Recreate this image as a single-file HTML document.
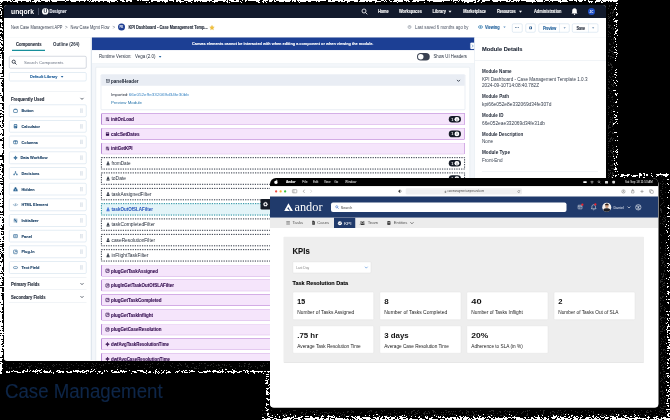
<!DOCTYPE html>
<html><head><meta charset="utf-8"><title>Case Management</title>
<style>
html,body{margin:0;padding:0;background:#000;}
body{width:670px;height:420px;position:relative;overflow:hidden;font-family:"Liberation Sans",sans-serif;}
.b{position:absolute;display:block;}
.t{position:absolute;white-space:nowrap;display:block;}
.w{position:absolute;overflow:hidden;transform-origin:0 0;transform:scale(0.25) translateZ(0);}
svg{overflow:visible}
</style></head><body>
<svg class="b" style="left:0;top:0" width="670" height="420" shape-rendering="crispEdges"><path d="M609 5h1v1h-1zM611 5h1v1h-1zM609 6h1v1h-1zM608 8h1v1h-1zM611 9h1v1h-1zM613 10h1v1h-1zM613 11h1v1h-1zM610 12h1v1h-1zM612 12h1v1h-1zM613 12h1v1h-1zM610 13h1v1h-1zM612 13h1v1h-1zM608 14h1v1h-1zM612 15h1v1h-1zM608 16h1v1h-1zM610 16h1v1h-1zM609 17h1v1h-1zM608 18h1v1h-1zM609 20h1v1h-1zM613 21h1v1h-1zM608 22h1v1h-1zM608 24h1v1h-1zM608 25h1v1h-1zM609 25h1v1h-1zM610 25h1v1h-1zM609 26h1v1h-1zM608 27h1v1h-1zM609 27h1v1h-1zM612 27h1v1h-1zM611 28h1v1h-1zM613 28h1v1h-1zM613 29h1v1h-1zM608 31h1v1h-1zM609 32h1v1h-1zM610 33h1v1h-1zM608 34h1v1h-1zM608 36h1v1h-1zM610 36h1v1h-1zM613 38h1v1h-1zM611 39h1v1h-1zM613 39h1v1h-1zM613 42h1v1h-1zM609 43h1v1h-1zM613 43h1v1h-1zM609 44h1v1h-1zM610 44h1v1h-1zM612 46h1v1h-1zM611 47h1v1h-1zM609 49h1v1h-1zM609 50h1v1h-1zM610 50h1v1h-1zM611 51h1v1h-1zM612 51h1v1h-1zM608 52h1v1h-1zM609 52h1v1h-1zM613 52h1v1h-1zM612 53h1v1h-1zM613 54h1v1h-1zM608 55h1v1h-1zM608 56h1v1h-1zM610 56h1v1h-1zM611 56h1v1h-1zM612 57h1v1h-1zM613 57h1v1h-1zM610 58h1v1h-1zM608 62h1v1h-1zM610 63h1v1h-1zM608 64h1v1h-1zM610 64h1v1h-1zM611 64h1v1h-1zM608 65h1v1h-1zM609 65h1v1h-1zM611 65h1v1h-1zM612 66h1v1h-1zM611 67h1v1h-1zM612 67h1v1h-1zM611 69h1v1h-1zM609 70h1v1h-1zM608 71h1v1h-1zM611 73h1v1h-1zM609 76h1v1h-1zM612 76h1v1h-1zM613 76h1v1h-1zM610 77h1v1h-1zM608 79h1v1h-1zM611 79h1v1h-1zM608 81h1v1h-1zM609 81h1v1h-1zM609 82h1v1h-1zM613 83h1v1h-1zM608 84h1v1h-1zM611 84h1v1h-1zM613 84h1v1h-1zM612 85h1v1h-1zM613 86h1v1h-1zM608 87h1v1h-1zM608 88h1v1h-1zM609 88h1v1h-1zM609 90h1v1h-1zM611 91h1v1h-1zM610 93h1v1h-1zM608 95h1v1h-1zM612 96h1v1h-1zM608 97h1v1h-1zM611 97h1v1h-1zM612 97h1v1h-1zM612 99h1v1h-1zM610 101h1v1h-1zM613 102h1v1h-1zM611 105h1v1h-1zM613 105h1v1h-1zM608 106h1v1h-1zM612 106h1v1h-1zM609 107h1v1h-1zM608 108h1v1h-1zM613 109h1v1h-1zM611 110h1v1h-1zM608 112h1v1h-1zM611 112h1v1h-1zM608 114h1v1h-1zM613 115h1v1h-1zM610 117h1v1h-1zM612 117h1v1h-1zM612 118h1v1h-1zM610 119h1v1h-1zM611 119h1v1h-1zM612 120h1v1h-1zM610 121h1v1h-1zM609 122h1v1h-1zM610 122h1v1h-1zM612 122h1v1h-1zM609 124h1v1h-1zM612 124h1v1h-1zM608 125h1v1h-1zM612 125h1v1h-1zM608 126h1v1h-1zM612 126h1v1h-1zM608 127h1v1h-1zM609 127h1v1h-1zM610 127h1v1h-1zM608 128h1v1h-1zM613 129h1v1h-1zM610 131h1v1h-1zM609 132h1v1h-1zM612 132h1v1h-1zM608 133h1v1h-1zM612 133h1v1h-1zM613 133h1v1h-1zM608 135h1v1h-1zM611 137h1v1h-1zM608 138h1v1h-1zM610 138h1v1h-1zM611 138h1v1h-1zM613 138h1v1h-1zM610 139h1v1h-1zM612 139h1v1h-1zM609 140h1v1h-1zM612 140h1v1h-1zM608 141h1v1h-1zM609 141h1v1h-1zM610 141h1v1h-1zM608 143h1v1h-1zM608 145h1v1h-1zM612 145h1v1h-1zM608 147h1v1h-1zM613 147h1v1h-1zM612 148h1v1h-1zM613 149h1v1h-1zM610 150h1v1h-1zM611 150h1v1h-1zM608 151h1v1h-1zM610 151h1v1h-1zM611 152h1v1h-1zM612 152h1v1h-1zM608 153h1v1h-1zM612 153h1v1h-1zM613 154h1v1h-1zM613 155h1v1h-1zM608 156h1v1h-1zM610 156h1v1h-1zM613 158h1v1h-1zM611 160h1v1h-1zM612 160h1v1h-1zM608 163h1v1h-1zM613 163h1v1h-1zM612 164h1v1h-1zM610 165h1v1h-1zM611 165h1v1h-1zM612 165h1v1h-1zM611 168h1v1h-1zM612 168h1v1h-1zM613 168h1v1h-1zM608 169h1v1h-1zM613 169h1v1h-1zM608 170h1v1h-1zM609 170h1v1h-1zM610 170h1v1h-1zM610 172h1v1h-1zM612 172h1v1h-1zM608 173h1v1h-1zM610 173h1v1h-1zM612 173h1v1h-1zM613 173h1v1h-1zM609 174h1v1h-1zM612 174h1v1h-1zM608 175h1v1h-1zM612 175h1v1h-1zM661 175h1v1h-1zM662 175h1v1h-1zM609 176h1v1h-1zM611 176h1v1h-1zM661 176h1v1h-1zM608 177h1v1h-1zM611 177h1v1h-1zM663 179h1v1h-1zM662 181h1v1h-1zM660 183h1v1h-1zM663 183h1v1h-1zM662 184h1v1h-1zM665 184h1v1h-1zM662 186h1v1h-1zM665 187h1v1h-1zM662 188h1v1h-1zM660 190h1v1h-1zM661 190h1v1h-1zM661 192h1v1h-1zM665 192h1v1h-1zM662 194h1v1h-1zM660 196h1v1h-1zM661 198h1v1h-1zM662 198h1v1h-1zM663 200h1v1h-1zM663 202h1v1h-1zM662 203h1v1h-1zM661 204h1v1h-1zM660 205h1v1h-1zM664 206h1v1h-1zM660 208h1v1h-1zM660 209h1v1h-1zM661 209h1v1h-1zM660 210h1v1h-1zM661 210h1v1h-1zM661 211h1v1h-1zM661 212h1v1h-1zM664 215h1v1h-1zM660 216h1v1h-1zM663 217h1v1h-1zM665 217h1v1h-1zM664 218h1v1h-1zM662 219h1v1h-1zM665 219h1v1h-1zM665 220h1v1h-1zM663 221h1v1h-1zM664 221h1v1h-1zM660 223h1v1h-1zM662 223h1v1h-1zM663 224h1v1h-1zM664 233h1v1h-1zM660 234h1v1h-1zM661 235h1v1h-1zM665 240h1v1h-1zM661 242h1v1h-1zM665 243h1v1h-1zM665 246h1v1h-1zM660 247h1v1h-1zM660 248h1v1h-1zM665 248h1v1h-1zM665 250h1v1h-1zM660 252h1v1h-1zM665 253h1v1h-1zM664 254h1v1h-1zM665 255h1v1h-1zM662 256h1v1h-1zM664 257h1v1h-1zM661 258h1v1h-1zM662 258h1v1h-1zM665 258h1v1h-1zM661 260h1v1h-1zM662 260h1v1h-1zM663 261h1v1h-1zM662 262h1v1h-1zM663 262h1v1h-1zM662 263h1v1h-1zM664 264h1v1h-1zM661 265h1v1h-1zM665 265h1v1h-1zM664 266h1v1h-1zM664 270h1v1h-1zM664 271h1v1h-1zM661 273h1v1h-1zM663 273h1v1h-1zM661 274h1v1h-1zM663 274h1v1h-1zM665 274h1v1h-1zM663 275h1v1h-1zM662 276h1v1h-1zM663 276h1v1h-1zM662 277h1v1h-1zM661 279h1v1h-1zM662 279h1v1h-1zM664 279h1v1h-1zM660 280h1v1h-1zM660 281h1v1h-1zM661 281h1v1h-1zM662 281h1v1h-1zM660 282h1v1h-1zM664 282h1v1h-1zM663 283h1v1h-1zM664 283h1v1h-1zM662 284h1v1h-1zM663 285h1v1h-1zM664 285h1v1h-1zM662 286h1v1h-1zM660 287h1v1h-1zM663 289h1v1h-1zM660 291h1v1h-1zM662 292h1v1h-1zM664 293h1v1h-1zM665 294h1v1h-1zM662 296h1v1h-1zM663 296h1v1h-1zM660 297h1v1h-1zM662 297h1v1h-1zM660 298h1v1h-1zM661 298h1v1h-1zM660 300h1v1h-1zM663 300h1v1h-1zM660 303h1v1h-1zM660 304h1v1h-1zM662 305h1v1h-1zM660 306h1v1h-1zM661 306h1v1h-1zM664 307h1v1h-1zM661 308h1v1h-1zM665 308h1v1h-1zM664 309h1v1h-1zM660 310h1v1h-1zM664 310h1v1h-1zM660 311h1v1h-1zM665 314h1v1h-1zM660 316h1v1h-1zM661 317h1v1h-1zM662 317h1v1h-1zM663 317h1v1h-1zM665 317h1v1h-1zM660 318h1v1h-1zM661 318h1v1h-1zM664 318h1v1h-1zM660 319h1v1h-1zM661 320h1v1h-1zM661 322h1v1h-1zM665 322h1v1h-1zM665 323h1v1h-1zM662 325h1v1h-1zM660 326h1v1h-1zM664 326h1v1h-1zM663 327h1v1h-1zM662 328h1v1h-1zM662 329h1v1h-1zM664 330h1v1h-1zM660 331h1v1h-1zM661 331h1v1h-1zM662 331h1v1h-1zM660 333h1v1h-1zM664 336h1v1h-1zM664 337h1v1h-1zM661 338h1v1h-1zM662 339h1v1h-1zM665 339h1v1h-1zM661 341h1v1h-1zM663 341h1v1h-1zM665 342h1v1h-1zM661 343h1v1h-1zM660 344h1v1h-1zM664 344h1v1h-1zM660 346h1v1h-1zM661 349h1v1h-1zM663 349h1v1h-1zM664 349h1v1h-1zM663 350h1v1h-1zM665 350h1v1h-1zM661 352h1v1h-1zM665 352h1v1h-1zM661 353h1v1h-1zM660 354h1v1h-1zM663 356h1v1h-1zM661 357h1v1h-1zM662 357h1v1h-1zM665 357h1v1h-1zM662 359h1v1h-1zM661 360h1v1h-1zM663 361h1v1h-1zM660 362h1v1h-1zM665 362h1v1h-1zM13 363h1v1h-1zM19 363h1v1h-1zM21 363h1v1h-1zM26 363h1v1h-1zM28 363h1v1h-1zM38 363h1v1h-1zM40 363h1v1h-1zM41 363h1v1h-1zM67 363h1v1h-1zM76 363h1v1h-1zM84 363h1v1h-1zM87 363h1v1h-1zM92 363h1v1h-1zM96 363h1v1h-1zM105 363h1v1h-1zM108 363h1v1h-1zM109 363h1v1h-1zM112 363h1v1h-1zM126 363h1v1h-1zM152 363h1v1h-1zM158 363h1v1h-1zM164 363h1v1h-1zM172 363h1v1h-1zM179 363h1v1h-1zM185 363h1v1h-1zM192 363h1v1h-1zM193 363h1v1h-1zM199 363h1v1h-1zM201 363h1v1h-1zM204 363h1v1h-1zM205 363h1v1h-1zM213 363h1v1h-1zM239 363h1v1h-1zM244 363h1v1h-1zM245 363h1v1h-1zM249 363h1v1h-1zM263 363h1v1h-1zM267 363h1v1h-1zM664 363h1v1h-1zM6 364h1v1h-1zM21 364h1v1h-1zM44 364h1v1h-1zM53 364h1v1h-1zM56 364h1v1h-1zM59 364h1v1h-1zM71 364h1v1h-1zM93 364h1v1h-1zM99 364h1v1h-1zM103 364h1v1h-1zM117 364h1v1h-1zM128 364h1v1h-1zM129 364h1v1h-1zM134 364h1v1h-1zM145 364h1v1h-1zM147 364h1v1h-1zM150 364h1v1h-1zM157 364h1v1h-1zM180 364h1v1h-1zM185 364h1v1h-1zM211 364h1v1h-1zM218 364h1v1h-1zM222 364h1v1h-1zM224 364h1v1h-1zM229 364h1v1h-1zM248 364h1v1h-1zM249 364h1v1h-1zM662 364h1v1h-1zM665 364h1v1h-1zM23 365h1v1h-1zM31 365h1v1h-1zM52 365h1v1h-1zM54 365h1v1h-1zM61 365h1v1h-1zM67 365h1v1h-1zM73 365h1v1h-1zM78 365h1v1h-1zM81 365h1v1h-1zM82 365h1v1h-1zM95 365h1v1h-1zM101 365h1v1h-1zM103 365h1v1h-1zM121 365h1v1h-1zM125 365h1v1h-1zM163 365h1v1h-1zM170 365h1v1h-1zM177 365h1v1h-1zM178 365h1v1h-1zM181 365h1v1h-1zM187 365h1v1h-1zM199 365h1v1h-1zM207 365h1v1h-1zM208 365h1v1h-1zM210 365h1v1h-1zM216 365h1v1h-1zM218 365h1v1h-1zM219 365h1v1h-1zM224 365h1v1h-1zM226 365h1v1h-1zM239 365h1v1h-1zM244 365h1v1h-1zM260 365h1v1h-1zM262 365h1v1h-1zM264 365h1v1h-1zM661 365h1v1h-1zM6 366h1v1h-1zM19 366h1v1h-1zM20 366h1v1h-1zM28 366h1v1h-1zM29 366h1v1h-1zM30 366h1v1h-1zM35 366h1v1h-1zM47 366h1v1h-1zM53 366h1v1h-1zM84 366h1v1h-1zM91 366h1v1h-1zM93 366h1v1h-1zM114 366h1v1h-1zM118 366h1v1h-1zM138 366h1v1h-1zM150 366h1v1h-1zM171 366h1v1h-1zM186 366h1v1h-1zM187 366h1v1h-1zM196 366h1v1h-1zM213 366h1v1h-1zM230 366h1v1h-1zM231 366h1v1h-1zM239 366h1v1h-1zM241 366h1v1h-1zM244 366h1v1h-1zM248 366h1v1h-1zM251 366h1v1h-1zM255 366h1v1h-1zM261 366h1v1h-1zM262 366h1v1h-1zM663 366h1v1h-1zM9 367h1v1h-1zM11 367h1v1h-1zM16 367h1v1h-1zM19 367h1v1h-1zM29 367h1v1h-1zM37 367h1v1h-1zM43 367h1v1h-1zM69 367h1v1h-1zM100 367h1v1h-1zM117 367h1v1h-1zM149 367h1v1h-1zM152 367h1v1h-1zM174 367h1v1h-1zM188 367h1v1h-1zM191 367h1v1h-1zM194 367h1v1h-1zM205 367h1v1h-1zM220 367h1v1h-1zM221 367h1v1h-1zM250 367h1v1h-1zM257 367h1v1h-1zM662 367h1v1h-1zM663 367h1v1h-1zM665 367h1v1h-1zM9 368h1v1h-1zM11 368h1v1h-1zM25 368h1v1h-1zM29 368h1v1h-1zM39 368h1v1h-1zM46 368h1v1h-1zM49 368h1v1h-1zM60 368h1v1h-1zM63 368h1v1h-1zM66 368h1v1h-1zM67 368h1v1h-1zM78 368h1v1h-1zM92 368h1v1h-1zM96 368h1v1h-1zM120 368h1v1h-1zM125 368h1v1h-1zM126 368h1v1h-1zM144 368h1v1h-1zM159 368h1v1h-1zM178 368h1v1h-1zM194 368h1v1h-1zM195 368h1v1h-1zM196 368h1v1h-1zM198 368h1v1h-1zM205 368h1v1h-1zM218 368h1v1h-1zM225 368h1v1h-1zM235 368h1v1h-1zM248 368h1v1h-1zM257 368h1v1h-1zM662 369h1v1h-1zM663 369h1v1h-1zM663 371h1v1h-1zM664 371h1v1h-1zM660 372h1v1h-1zM660 373h1v1h-1zM663 374h1v1h-1zM665 374h1v1h-1zM663 376h1v1h-1zM665 376h1v1h-1zM664 377h1v1h-1zM661 378h1v1h-1zM664 378h1v1h-1zM662 379h1v1h-1zM661 380h1v1h-1zM660 381h1v1h-1zM665 381h1v1h-1zM663 382h1v1h-1zM664 383h1v1h-1zM661 386h1v1h-1zM661 387h1v1h-1zM665 387h1v1h-1zM662 390h1v1h-1zM660 391h1v1h-1zM661 391h1v1h-1zM662 391h1v1h-1zM663 392h1v1h-1zM662 393h1v1h-1zM662 394h1v1h-1zM664 396h1v1h-1zM662 397h1v1h-1zM665 397h1v1h-1zM660 398h1v1h-1zM663 398h1v1h-1zM665 399h1v1h-1zM661 400h1v1h-1zM664 402h1v1h-1zM661 403h1v1h-1zM664 403h1v1h-1zM663 406h1v1h-1zM664 406h1v1h-1zM665 406h1v1h-1zM660 407h1v1h-1zM661 408h1v1h-1zM662 408h1v1h-1zM663 408h1v1h-1zM262 410h1v1h-1zM265 410h1v1h-1zM271 410h1v1h-1zM280 410h1v1h-1zM293 410h1v1h-1zM294 410h1v1h-1zM295 410h1v1h-1zM306 410h1v1h-1zM316 410h1v1h-1zM317 410h1v1h-1zM334 410h1v1h-1zM351 410h1v1h-1zM370 410h1v1h-1zM371 410h1v1h-1zM381 410h1v1h-1zM384 410h1v1h-1zM394 410h1v1h-1zM413 410h1v1h-1zM414 410h1v1h-1zM418 410h1v1h-1zM432 410h1v1h-1zM433 410h1v1h-1zM445 410h1v1h-1zM446 410h1v1h-1zM460 410h1v1h-1zM466 410h1v1h-1zM480 410h1v1h-1zM491 410h1v1h-1zM492 410h1v1h-1zM493 410h1v1h-1zM505 410h1v1h-1zM527 410h1v1h-1zM529 410h1v1h-1zM540 410h1v1h-1zM543 410h1v1h-1zM544 410h1v1h-1zM558 410h1v1h-1zM560 410h1v1h-1zM565 410h1v1h-1zM571 410h1v1h-1zM585 410h1v1h-1zM588 410h1v1h-1zM610 410h1v1h-1zM614 410h1v1h-1zM623 410h1v1h-1zM634 410h1v1h-1zM641 410h1v1h-1zM647 410h1v1h-1zM650 410h1v1h-1zM655 410h1v1h-1zM660 410h1v1h-1zM662 410h1v1h-1zM666 410h1v1h-1zM267 411h1v1h-1zM280 411h1v1h-1zM289 411h1v1h-1zM310 411h1v1h-1zM313 411h1v1h-1zM347 411h1v1h-1zM348 411h1v1h-1zM352 411h1v1h-1zM353 411h1v1h-1zM368 411h1v1h-1zM369 411h1v1h-1zM371 411h1v1h-1zM376 411h1v1h-1zM382 411h1v1h-1zM405 411h1v1h-1zM411 411h1v1h-1zM412 411h1v1h-1zM417 411h1v1h-1zM425 411h1v1h-1zM428 411h1v1h-1zM433 411h1v1h-1zM434 411h1v1h-1zM448 411h1v1h-1zM449 411h1v1h-1zM451 411h1v1h-1zM453 411h1v1h-1zM455 411h1v1h-1zM459 411h1v1h-1zM467 411h1v1h-1zM468 411h1v1h-1zM472 411h1v1h-1zM475 411h1v1h-1zM476 411h1v1h-1zM489 411h1v1h-1zM490 411h1v1h-1zM493 411h1v1h-1zM499 411h1v1h-1zM500 411h1v1h-1zM504 411h1v1h-1zM507 411h1v1h-1zM509 411h1v1h-1zM510 411h1v1h-1zM513 411h1v1h-1zM523 411h1v1h-1zM525 411h1v1h-1zM527 411h1v1h-1zM543 411h1v1h-1zM552 411h1v1h-1zM553 411h1v1h-1zM564 411h1v1h-1zM575 411h1v1h-1zM582 411h1v1h-1zM591 411h1v1h-1zM593 411h1v1h-1zM614 411h1v1h-1zM621 411h1v1h-1zM624 411h1v1h-1zM628 411h1v1h-1zM633 411h1v1h-1zM646 411h1v1h-1zM650 411h1v1h-1zM651 411h1v1h-1zM659 411h1v1h-1zM661 411h1v1h-1zM669 411h1v1h-1zM268 412h1v1h-1zM287 412h1v1h-1zM301 412h1v1h-1zM302 412h1v1h-1zM306 412h1v1h-1zM312 412h1v1h-1zM314 412h1v1h-1zM316 412h1v1h-1zM322 412h1v1h-1zM324 412h1v1h-1zM325 412h1v1h-1zM326 412h1v1h-1zM329 412h1v1h-1zM331 412h1v1h-1zM335 412h1v1h-1zM338 412h1v1h-1zM343 412h1v1h-1zM347 412h1v1h-1zM351 412h1v1h-1zM353 412h1v1h-1zM361 412h1v1h-1zM367 412h1v1h-1zM375 412h1v1h-1zM376 412h1v1h-1zM394 412h1v1h-1zM399 412h1v1h-1zM405 412h1v1h-1zM411 412h1v1h-1zM415 412h1v1h-1zM419 412h1v1h-1zM424 412h1v1h-1zM429 412h1v1h-1zM433 412h1v1h-1zM435 412h1v1h-1zM441 412h1v1h-1zM443 412h1v1h-1zM446 412h1v1h-1zM448 412h1v1h-1zM462 412h1v1h-1zM466 412h1v1h-1zM468 412h1v1h-1zM473 412h1v1h-1zM500 412h1v1h-1zM509 412h1v1h-1zM517 412h1v1h-1zM522 412h1v1h-1zM536 412h1v1h-1zM543 412h1v1h-1zM550 412h1v1h-1zM554 412h1v1h-1zM557 412h1v1h-1zM561 412h1v1h-1zM577 412h1v1h-1zM581 412h1v1h-1zM588 412h1v1h-1zM593 412h1v1h-1zM617 412h1v1h-1zM624 412h1v1h-1zM626 412h1v1h-1zM634 412h1v1h-1zM639 412h1v1h-1zM646 412h1v1h-1zM647 412h1v1h-1zM648 412h1v1h-1zM660 412h1v1h-1zM662 412h1v1h-1zM663 412h1v1h-1zM665 412h1v1h-1zM668 412h1v1h-1zM669 412h1v1h-1zM264 413h1v1h-1zM265 413h1v1h-1zM270 413h1v1h-1zM282 413h1v1h-1zM285 413h1v1h-1zM290 413h1v1h-1zM301 413h1v1h-1zM305 413h1v1h-1zM320 413h1v1h-1zM327 413h1v1h-1zM328 413h1v1h-1zM337 413h1v1h-1zM340 413h1v1h-1zM360 413h1v1h-1zM369 413h1v1h-1zM381 413h1v1h-1zM388 413h1v1h-1zM390 413h1v1h-1zM396 413h1v1h-1zM408 413h1v1h-1zM411 413h1v1h-1zM416 413h1v1h-1zM417 413h1v1h-1zM423 413h1v1h-1zM424 413h1v1h-1zM426 413h1v1h-1zM427 413h1v1h-1zM429 413h1v1h-1zM450 413h1v1h-1zM452 413h1v1h-1zM462 413h1v1h-1zM466 413h1v1h-1zM473 413h1v1h-1zM493 413h1v1h-1zM497 413h1v1h-1zM505 413h1v1h-1zM521 413h1v1h-1zM527 413h1v1h-1zM543 413h1v1h-1zM550 413h1v1h-1zM563 413h1v1h-1zM566 413h1v1h-1zM593 413h1v1h-1zM602 413h1v1h-1zM612 413h1v1h-1zM615 413h1v1h-1zM621 413h1v1h-1zM622 413h1v1h-1zM628 413h1v1h-1zM637 413h1v1h-1zM656 413h1v1h-1zM665 413h1v1h-1zM262 414h1v1h-1zM274 414h1v1h-1zM283 414h1v1h-1zM284 414h1v1h-1zM285 414h1v1h-1zM286 414h1v1h-1zM294 414h1v1h-1zM303 414h1v1h-1zM305 414h1v1h-1zM316 414h1v1h-1zM324 414h1v1h-1zM342 414h1v1h-1zM344 414h1v1h-1zM350 414h1v1h-1zM374 414h1v1h-1zM390 414h1v1h-1zM404 414h1v1h-1zM414 414h1v1h-1zM415 414h1v1h-1zM424 414h1v1h-1zM434 414h1v1h-1zM435 414h1v1h-1zM437 414h1v1h-1zM441 414h1v1h-1zM443 414h1v1h-1zM445 414h1v1h-1zM449 414h1v1h-1zM452 414h1v1h-1zM454 414h1v1h-1zM455 414h1v1h-1zM468 414h1v1h-1zM474 414h1v1h-1zM476 414h1v1h-1zM478 414h1v1h-1zM487 414h1v1h-1zM488 414h1v1h-1zM490 414h1v1h-1zM506 414h1v1h-1zM516 414h1v1h-1zM527 414h1v1h-1zM537 414h1v1h-1zM541 414h1v1h-1zM542 414h1v1h-1zM552 414h1v1h-1zM553 414h1v1h-1zM558 414h1v1h-1zM561 414h1v1h-1zM563 414h1v1h-1zM572 414h1v1h-1zM586 414h1v1h-1zM595 414h1v1h-1zM597 414h1v1h-1zM599 414h1v1h-1zM601 414h1v1h-1zM604 414h1v1h-1zM605 414h1v1h-1zM611 414h1v1h-1zM613 414h1v1h-1zM619 414h1v1h-1zM631 414h1v1h-1zM640 414h1v1h-1zM644 414h1v1h-1zM646 414h1v1h-1zM650 414h1v1h-1zM659 414h1v1h-1zM271 415h1v1h-1zM282 415h1v1h-1zM285 415h1v1h-1zM293 415h1v1h-1zM300 415h1v1h-1zM318 415h1v1h-1zM319 415h1v1h-1zM324 415h1v1h-1zM329 415h1v1h-1zM341 415h1v1h-1zM344 415h1v1h-1zM349 415h1v1h-1zM359 415h1v1h-1zM378 415h1v1h-1zM379 415h1v1h-1zM386 415h1v1h-1zM387 415h1v1h-1zM394 415h1v1h-1zM397 415h1v1h-1zM401 415h1v1h-1zM409 415h1v1h-1zM412 415h1v1h-1zM421 415h1v1h-1zM426 415h1v1h-1zM432 415h1v1h-1zM436 415h1v1h-1zM442 415h1v1h-1zM460 415h1v1h-1zM467 415h1v1h-1zM469 415h1v1h-1zM471 415h1v1h-1zM473 415h1v1h-1zM474 415h1v1h-1zM481 415h1v1h-1zM492 415h1v1h-1zM494 415h1v1h-1zM500 415h1v1h-1zM501 415h1v1h-1zM503 415h1v1h-1zM515 415h1v1h-1zM526 415h1v1h-1zM527 415h1v1h-1zM550 415h1v1h-1zM561 415h1v1h-1zM592 415h1v1h-1zM601 415h1v1h-1zM602 415h1v1h-1zM603 415h1v1h-1zM609 415h1v1h-1zM610 415h1v1h-1zM611 415h1v1h-1zM619 415h1v1h-1zM624 415h1v1h-1zM634 415h1v1h-1zM654 415h1v1h-1zM661 415h1v1h-1zM662 415h1v1h-1zM664 416h1v1h-1zM660 418h1v1h-1z" fill="#2b2b2b"/><path d="M0 0h2v1h-2zM2 0h6v1h-6zM8 0h3v1h-3zM12 0h1v1h-1zM15 0h10v1h-10zM25 0h6v1h-6zM34 0h4v1h-4zM38 0h1v1h-1zM39 0h1v1h-1zM41 0h2v1h-2zM43 0h1v1h-1zM44 0h3v1h-3zM47 0h3v1h-3zM51 0h4v1h-4zM55 0h4v1h-4zM59 0h6v1h-6zM66 0h1v1h-1zM67 0h2v1h-2zM70 0h1v1h-1zM71 0h2v1h-2zM73 0h9v1h-9zM82 0h2v1h-2zM84 0h2v1h-2zM87 0h2v1h-2zM90 0h1v1h-1zM92 0h4v1h-4zM96 0h3v1h-3zM99 0h3v1h-3zM102 0h3v1h-3zM105 0h2v1h-2zM107 0h10v1h-10zM120 0h4v1h-4zM126 0h3v1h-3zM129 0h1v1h-1zM130 0h2v1h-2zM137 0h2v1h-2zM140 0h1v1h-1zM142 0h7v1h-7zM151 0h1v1h-1zM152 0h2v1h-2zM154 0h1v1h-1zM155 0h7v1h-7zM162 0h6v1h-6zM169 0h1v1h-1zM170 0h4v1h-4zM176 0h5v1h-5zM184 0h9v1h-9zM194 0h3v1h-3zM197 0h4v1h-4zM201 0h4v1h-4zM205 0h7v1h-7zM214 0h5v1h-5zM219 0h6v1h-6zM225 0h1v1h-1zM227 0h1v1h-1zM229 0h3v1h-3zM232 0h2v1h-2zM236 0h3v1h-3zM242 0h1v1h-1zM245 0h1v1h-1zM246 0h1v1h-1zM248 0h4v1h-4zM252 0h2v1h-2zM254 0h1v1h-1zM255 0h2v1h-2zM257 0h3v1h-3zM263 0h1v1h-1zM264 0h4v1h-4zM269 0h1v1h-1zM270 0h3v1h-3zM274 0h1v1h-1zM276 0h7v1h-7zM283 0h2v1h-2zM285 0h6v1h-6zM292 0h4v1h-4zM297 0h4v1h-4zM301 0h1v1h-1zM302 0h8v1h-8zM310 0h14v1h-14zM324 0h1v1h-1zM325 0h1v1h-1zM328 0h2v1h-2zM330 0h1v1h-1zM332 0h2v1h-2zM334 0h2v1h-2zM336 0h1v1h-1zM337 0h6v1h-6zM344 0h2v1h-2zM346 0h12v1h-12zM360 0h2v1h-2zM362 0h1v1h-1zM363 0h7v1h-7zM370 0h2v1h-2zM372 0h5v1h-5zM381 0h3v1h-3zM385 0h1v1h-1zM389 0h1v1h-1zM394 0h1v1h-1zM395 0h8v1h-8zM404 0h5v1h-5zM413 0h2v1h-2zM415 0h7v1h-7zM422 0h2v1h-2zM424 0h1v1h-1zM427 0h2v1h-2zM429 0h1v1h-1zM430 0h6v1h-6zM436 0h8v1h-8zM444 0h5v1h-5zM449 0h1v1h-1zM451 0h1v1h-1zM453 0h1v1h-1zM454 0h2v1h-2zM456 0h2v1h-2zM459 0h1v1h-1zM461 0h14v1h-14zM475 0h1v1h-1zM478 0h2v1h-2zM482 0h6v1h-6zM488 0h2v1h-2zM492 0h16v1h-16zM509 0h2v1h-2zM513 0h3v1h-3zM516 0h2v1h-2zM518 0h2v1h-2zM521 0h3v1h-3zM524 0h6v1h-6zM530 0h5v1h-5zM536 0h3v1h-3zM539 0h4v1h-4zM545 0h1v1h-1zM546 0h3v1h-3zM550 0h8v1h-8zM558 0h1v1h-1zM559 0h2v1h-2zM562 0h5v1h-5zM569 0h2v1h-2zM571 0h2v1h-2zM574 0h3v1h-3zM578 0h2v1h-2zM580 0h1v1h-1zM581 0h2v1h-2zM584 0h2v1h-2zM588 0h1v1h-1zM596 0h2v1h-2zM598 0h3v1h-3zM602 0h5v1h-5zM607 0h4v1h-4zM611 0h4v1h-4zM615 0h3v1h-3zM0 1h2v1h-2zM2 1h1v1h-1zM7 1h1v1h-1zM10 1h1v1h-1zM11 1h1v1h-1zM13 1h1v1h-1zM14 1h4v1h-4zM21 1h1v1h-1zM26 1h2v1h-2zM28 1h1v1h-1zM30 1h1v1h-1zM32 1h1v1h-1zM33 1h2v1h-2zM35 1h2v1h-2zM38 1h2v1h-2zM40 1h1v1h-1zM45 1h3v1h-3zM49 1h1v1h-1zM52 1h4v1h-4zM56 1h1v1h-1zM65 1h1v1h-1zM71 1h3v1h-3zM74 1h2v1h-2zM79 1h1v1h-1zM84 1h1v1h-1zM89 1h1v1h-1zM91 1h3v1h-3zM95 1h1v1h-1zM98 1h1v1h-1zM99 1h1v1h-1zM103 1h1v1h-1zM107 1h1v1h-1zM108 1h1v1h-1zM109 1h1v1h-1zM111 1h1v1h-1zM112 1h3v1h-3zM117 1h1v1h-1zM122 1h2v1h-2zM124 1h1v1h-1zM126 1h1v1h-1zM127 1h1v1h-1zM130 1h1v1h-1zM131 1h1v1h-1zM151 1h2v1h-2zM157 1h1v1h-1zM158 1h2v1h-2zM162 1h1v1h-1zM164 1h2v1h-2zM166 1h2v1h-2zM173 1h1v1h-1zM176 1h1v1h-1zM177 1h1v1h-1zM179 1h5v1h-5zM188 1h2v1h-2zM190 1h1v1h-1zM194 1h2v1h-2zM197 1h1v1h-1zM200 1h1v1h-1zM202 1h1v1h-1zM203 1h1v1h-1zM204 1h2v1h-2zM206 1h1v1h-1zM209 1h1v1h-1zM212 1h3v1h-3zM215 1h3v1h-3zM223 1h2v1h-2zM226 1h1v1h-1zM227 1h1v1h-1zM231 1h1v1h-1zM232 1h2v1h-2zM234 1h2v1h-2zM236 1h2v1h-2zM238 1h1v1h-1zM240 1h1v1h-1zM245 1h1v1h-1zM256 1h1v1h-1zM257 1h1v1h-1zM258 1h1v1h-1zM262 1h1v1h-1zM263 1h1v1h-1zM265 1h1v1h-1zM269 1h3v1h-3zM274 1h1v1h-1zM275 1h1v1h-1zM279 1h5v1h-5zM285 1h1v1h-1zM286 1h1v1h-1zM287 1h3v1h-3zM292 1h1v1h-1zM294 1h1v1h-1zM295 1h1v1h-1zM298 1h1v1h-1zM300 1h2v1h-2zM302 1h1v1h-1zM303 1h1v1h-1zM304 1h2v1h-2zM308 1h2v1h-2zM310 1h1v1h-1zM316 1h1v1h-1zM318 1h2v1h-2zM328 1h3v1h-3zM331 1h3v1h-3zM334 1h1v1h-1zM338 1h1v1h-1zM339 1h1v1h-1zM341 1h4v1h-4zM347 1h3v1h-3zM354 1h2v1h-2zM356 1h1v1h-1zM357 1h1v1h-1zM359 1h1v1h-1zM360 1h3v1h-3zM363 1h2v1h-2zM366 1h1v1h-1zM367 1h1v1h-1zM369 1h3v1h-3zM375 1h6v1h-6zM384 1h1v1h-1zM386 1h1v1h-1zM390 1h1v1h-1zM391 1h1v1h-1zM393 1h1v1h-1zM394 1h1v1h-1zM395 1h2v1h-2zM398 1h1v1h-1zM399 1h3v1h-3zM402 1h1v1h-1zM406 1h1v1h-1zM408 1h1v1h-1zM409 1h1v1h-1zM412 1h4v1h-4zM417 1h1v1h-1zM418 1h1v1h-1zM429 1h1v1h-1zM433 1h2v1h-2zM435 1h2v1h-2zM437 1h3v1h-3zM440 1h2v1h-2zM443 1h1v1h-1zM453 1h1v1h-1zM458 1h1v1h-1zM462 1h1v1h-1zM464 1h4v1h-4zM468 1h4v1h-4zM472 1h1v1h-1zM475 1h1v1h-1zM477 1h2v1h-2zM482 1h1v1h-1zM483 1h2v1h-2zM493 1h2v1h-2zM495 1h3v1h-3zM500 1h1v1h-1zM506 1h1v1h-1zM507 1h3v1h-3zM511 1h3v1h-3zM516 1h1v1h-1zM518 1h1v1h-1zM526 1h3v1h-3zM529 1h1v1h-1zM530 1h3v1h-3zM533 1h1v1h-1zM534 1h2v1h-2zM537 1h3v1h-3zM540 1h3v1h-3zM544 1h1v1h-1zM549 1h1v1h-1zM552 1h1v1h-1zM558 1h6v1h-6zM564 1h1v1h-1zM565 1h2v1h-2zM567 1h1v1h-1zM576 1h1v1h-1zM579 1h1v1h-1zM580 1h1v1h-1zM581 1h1v1h-1zM588 1h1v1h-1zM589 1h3v1h-3zM592 1h1v1h-1zM595 1h4v1h-4zM599 1h1v1h-1zM601 1h1v1h-1zM603 1h1v1h-1zM604 1h1v1h-1zM605 1h1v1h-1zM608 1h1v1h-1zM610 1h2v1h-2zM613 1h3v1h-3zM616 1h1v1h-1zM1 2h1v1h-1zM17 2h1v1h-1zM35 2h1v1h-1zM109 2h1v1h-1zM146 2h1v1h-1zM149 2h1v1h-1zM165 2h1v1h-1zM180 2h1v1h-1zM186 2h1v1h-1zM191 2h1v1h-1zM214 2h1v1h-1zM227 2h1v1h-1zM229 2h1v1h-1zM241 2h1v1h-1zM258 2h1v1h-1zM259 2h1v1h-1zM263 2h1v1h-1zM266 2h1v1h-1zM299 2h1v1h-1zM347 2h1v1h-1zM375 2h1v1h-1zM397 2h1v1h-1zM424 2h1v1h-1zM455 2h1v1h-1zM464 2h1v1h-1zM467 2h2v1h-2zM474 2h2v1h-2zM481 2h1v1h-1zM532 2h1v1h-1zM560 2h1v1h-1zM589 2h1v1h-1zM591 2h1v1h-1zM595 2h1v1h-1zM601 2h1v1h-1zM602 2h1v1h-1zM0 3h1v1h-1zM616 3h2v1h-2zM0 5h2v1h-2zM616 5h1v1h-1zM0 7h2v1h-2zM615 7h1v1h-1zM2 8h1v1h-1zM615 8h1v1h-1zM0 9h1v1h-1zM614 9h1v1h-1zM616 9h1v1h-1zM0 10h1v1h-1zM1 11h1v1h-1zM1 12h1v1h-1zM616 12h1v1h-1zM1 13h1v1h-1zM617 13h1v1h-1zM0 14h2v1h-2zM616 14h1v1h-1zM617 14h1v1h-1zM616 15h1v1h-1zM1 16h1v1h-1zM614 18h1v1h-1zM0 19h2v1h-2zM613 19h1v1h-1zM0 20h1v1h-1zM1 20h1v1h-1zM615 20h2v1h-2zM617 20h1v1h-1zM0 21h3v1h-3zM614 21h1v1h-1zM615 21h2v1h-2zM1 22h1v1h-1zM616 22h1v1h-1zM1 24h1v1h-1zM616 24h1v1h-1zM1 25h1v1h-1zM614 25h1v1h-1zM1 26h2v1h-2zM616 26h1v1h-1zM0 28h1v1h-1zM1 28h1v1h-1zM615 28h1v1h-1zM0 29h3v1h-3zM617 29h1v1h-1zM2 30h1v1h-1zM616 30h2v1h-2zM615 31h2v1h-2zM0 32h2v1h-2zM615 32h1v1h-1zM0 33h1v1h-1zM2 33h1v1h-1zM615 33h2v1h-2zM614 34h1v1h-1zM617 35h1v1h-1zM0 36h1v1h-1zM1 37h1v1h-1zM614 37h1v1h-1zM0 38h2v1h-2zM615 38h1v1h-1zM1 39h2v1h-2zM615 39h1v1h-1zM0 40h1v1h-1zM0 41h3v1h-3zM615 41h1v1h-1zM1 42h2v1h-2zM0 43h1v1h-1zM2 43h1v1h-1zM0 44h1v1h-1zM616 44h1v1h-1zM0 45h1v1h-1zM1 45h1v1h-1zM0 46h3v1h-3zM616 46h1v1h-1zM1 47h1v1h-1zM614 47h1v1h-1zM0 48h1v1h-1zM2 49h1v1h-1zM615 49h1v1h-1zM616 50h1v1h-1zM0 51h2v1h-2zM3 51h1v1h-1zM0 52h1v1h-1zM614 52h1v1h-1zM615 52h1v1h-1zM616 52h1v1h-1zM617 53h1v1h-1zM0 54h2v1h-2zM616 54h1v1h-1zM1 55h1v1h-1zM0 56h2v1h-2zM616 56h1v1h-1zM1 57h1v1h-1zM0 58h2v1h-2zM615 58h1v1h-1zM0 59h2v1h-2zM2 59h1v1h-1zM0 60h1v1h-1zM1 60h1v1h-1zM615 60h1v1h-1zM0 61h2v1h-2zM0 62h2v1h-2zM0 63h2v1h-2zM1 64h1v1h-1zM1 65h1v1h-1zM0 66h2v1h-2zM2 66h1v1h-1zM0 67h2v1h-2zM0 68h2v1h-2zM0 69h1v1h-1zM1 69h2v1h-2zM616 69h1v1h-1zM0 70h2v1h-2zM615 70h1v1h-1zM0 71h2v1h-2zM0 72h2v1h-2zM615 72h2v1h-2zM0 74h1v1h-1zM1 74h1v1h-1zM2 74h1v1h-1zM614 74h2v1h-2zM0 75h2v1h-2zM2 75h1v1h-1zM616 75h1v1h-1zM0 76h1v1h-1zM0 77h2v1h-2zM2 77h2v1h-2zM615 77h1v1h-1zM0 79h3v1h-3zM0 80h2v1h-2zM613 80h1v1h-1zM616 80h1v1h-1zM0 81h2v1h-2zM617 81h1v1h-1zM0 82h1v1h-1zM2 82h1v1h-1zM614 82h1v1h-1zM0 83h1v1h-1zM615 83h1v1h-1zM0 84h2v1h-2zM0 85h1v1h-1zM616 85h1v1h-1zM0 86h1v1h-1zM1 86h1v1h-1zM0 87h3v1h-3zM0 88h2v1h-2zM0 89h2v1h-2zM0 90h1v1h-1zM1 90h1v1h-1zM613 90h1v1h-1zM614 90h1v1h-1zM615 90h1v1h-1zM0 91h2v1h-2zM0 92h2v1h-2zM2 92h1v1h-1zM1 93h1v1h-1zM2 93h1v1h-1zM615 93h1v1h-1zM617 93h1v1h-1zM0 94h2v1h-2zM2 94h1v1h-1zM615 94h2v1h-2zM2 95h1v1h-1zM616 95h1v1h-1zM0 96h2v1h-2zM0 97h1v1h-1zM0 98h2v1h-2zM0 99h2v1h-2zM617 99h1v1h-1zM0 100h2v1h-2zM0 101h1v1h-1zM1 101h1v1h-1zM2 101h1v1h-1zM616 101h1v1h-1zM0 102h3v1h-3zM3 102h1v1h-1zM615 102h1v1h-1zM616 102h1v1h-1zM0 104h1v1h-1zM1 104h1v1h-1zM0 105h2v1h-2zM0 106h3v1h-3zM617 106h1v1h-1zM0 107h1v1h-1zM1 107h1v1h-1zM0 108h1v1h-1zM1 108h1v1h-1zM0 109h2v1h-2zM2 109h1v1h-1zM2 110h1v1h-1zM3 110h1v1h-1zM0 111h2v1h-2zM613 111h1v1h-1zM614 111h1v1h-1zM0 112h1v1h-1zM1 112h1v1h-1zM2 112h1v1h-1zM617 112h1v1h-1zM2 113h1v1h-1zM3 113h1v1h-1zM1 114h1v1h-1zM614 114h1v1h-1zM0 115h3v1h-3zM615 115h2v1h-2zM616 116h1v1h-1zM1 117h1v1h-1zM2 117h1v1h-1zM614 117h2v1h-2zM0 118h2v1h-2zM2 118h1v1h-1zM0 119h1v1h-1zM1 119h1v1h-1zM2 119h1v1h-1zM615 119h2v1h-2zM617 119h1v1h-1zM0 120h1v1h-1zM1 120h1v1h-1zM1 121h1v1h-1zM616 121h1v1h-1zM0 122h2v1h-2zM3 122h1v1h-1zM615 122h1v1h-1zM0 123h1v1h-1zM1 123h1v1h-1zM613 123h2v1h-2zM617 123h1v1h-1zM0 124h1v1h-1zM1 124h1v1h-1zM2 124h1v1h-1zM613 124h1v1h-1zM1 125h1v1h-1zM1 126h2v1h-2zM0 127h1v1h-1zM3 127h1v1h-1zM0 128h3v1h-3zM3 128h1v1h-1zM0 129h1v1h-1zM1 129h1v1h-1zM0 130h2v1h-2zM2 130h1v1h-1zM0 131h2v1h-2zM2 131h1v1h-1zM0 132h2v1h-2zM2 132h1v1h-1zM614 132h3v1h-3zM0 133h1v1h-1zM2 133h1v1h-1zM1 134h1v1h-1zM0 135h2v1h-2zM0 136h3v1h-3zM3 136h1v1h-1zM617 136h1v1h-1zM0 137h2v1h-2zM2 137h1v1h-1zM0 138h1v1h-1zM1 138h1v1h-1zM2 139h1v1h-1zM615 140h1v1h-1zM617 140h1v1h-1zM0 141h3v1h-3zM0 142h3v1h-3zM0 143h2v1h-2zM2 143h1v1h-1zM0 144h2v1h-2zM0 145h2v1h-2zM0 146h3v1h-3zM616 146h1v1h-1zM0 147h2v1h-2zM0 148h3v1h-3zM0 149h3v1h-3zM3 149h1v1h-1zM617 149h1v1h-1zM0 150h2v1h-2zM2 150h1v1h-1zM616 150h1v1h-1zM0 151h2v1h-2zM2 151h1v1h-1zM613 151h1v1h-1zM615 151h1v1h-1zM617 151h1v1h-1zM0 152h3v1h-3zM616 152h2v1h-2zM0 153h2v1h-2zM0 154h2v1h-2zM3 154h1v1h-1zM617 154h1v1h-1zM613 156h1v1h-1zM616 156h1v1h-1zM0 157h2v1h-2zM616 157h1v1h-1zM0 158h2v1h-2zM614 158h1v1h-1zM0 160h3v1h-3zM614 160h1v1h-1zM0 161h3v1h-3zM0 162h3v1h-3zM616 162h1v1h-1zM0 163h1v1h-1zM2 163h1v1h-1zM3 163h1v1h-1zM614 163h1v1h-1zM616 163h1v1h-1zM0 164h1v1h-1zM614 164h1v1h-1zM617 164h1v1h-1zM615 165h1v1h-1zM0 166h1v1h-1zM1 166h1v1h-1zM1 167h2v1h-2zM615 167h1v1h-1zM0 168h2v1h-2zM615 168h1v1h-1zM616 168h1v1h-1zM1 169h1v1h-1zM614 169h3v1h-3zM0 170h2v1h-2zM0 171h1v1h-1zM615 171h1v1h-1zM617 171h1v1h-1zM0 172h2v1h-2zM0 173h3v1h-3zM639 173h1v1h-1zM640 173h1v1h-1zM643 173h2v1h-2zM651 173h1v1h-1zM660 173h1v1h-1zM666 173h1v1h-1zM1 174h1v1h-1zM2 174h1v1h-1zM618 174h1v1h-1zM621 174h3v1h-3zM627 174h3v1h-3zM639 174h1v1h-1zM640 174h2v1h-2zM644 174h1v1h-1zM646 174h2v1h-2zM656 174h13v1h-13zM0 175h1v1h-1zM1 175h1v1h-1zM613 175h1v1h-1zM615 175h1v1h-1zM616 175h1v1h-1zM621 175h2v1h-2zM623 175h6v1h-6zM631 175h1v1h-1zM633 175h4v1h-4zM637 175h1v1h-1zM639 175h3v1h-3zM644 175h1v1h-1zM646 175h1v1h-1zM647 175h1v1h-1zM651 175h1v1h-1zM657 175h2v1h-2zM663 175h1v1h-1zM664 175h2v1h-2zM666 175h2v1h-2zM0 176h1v1h-1zM1 176h1v1h-1zM3 176h1v1h-1zM615 176h1v1h-1zM620 176h3v1h-3zM627 176h1v1h-1zM632 176h2v1h-2zM634 176h2v1h-2zM639 176h1v1h-1zM652 176h1v1h-1zM656 176h1v1h-1zM665 176h1v1h-1zM666 176h1v1h-1zM0 177h2v1h-2zM612 177h1v1h-1zM624 177h1v1h-1zM639 177h1v1h-1zM643 177h2v1h-2zM2 178h1v1h-1zM0 179h2v1h-2zM667 179h2v1h-2zM0 180h1v1h-1zM1 180h2v1h-2zM0 182h2v1h-2zM2 182h1v1h-1zM667 183h1v1h-1zM0 184h1v1h-1zM668 184h1v1h-1zM0 185h3v1h-3zM0 186h2v1h-2zM2 186h1v1h-1zM0 187h1v1h-1zM1 187h1v1h-1zM0 188h1v1h-1zM1 188h1v1h-1zM2 188h1v1h-1zM0 189h1v1h-1zM1 189h1v1h-1zM0 190h2v1h-2zM669 190h1v1h-1zM0 191h1v1h-1zM2 191h1v1h-1zM0 192h2v1h-2zM668 192h1v1h-1zM1 193h1v1h-1zM1 194h1v1h-1zM0 195h2v1h-2zM2 195h1v1h-1zM0 196h3v1h-3zM0 197h2v1h-2zM2 197h1v1h-1zM667 197h1v1h-1zM0 198h1v1h-1zM1 198h1v1h-1zM1 199h2v1h-2zM0 200h3v1h-3zM0 201h1v1h-1zM1 201h1v1h-1zM0 202h3v1h-3zM1 203h1v1h-1zM0 204h2v1h-2zM2 204h1v1h-1zM0 205h1v1h-1zM1 205h1v1h-1zM668 205h1v1h-1zM0 207h2v1h-2zM667 207h2v1h-2zM0 208h2v1h-2zM2 208h1v1h-1zM668 208h2v1h-2zM0 209h2v1h-2zM2 209h1v1h-1zM0 210h3v1h-3zM1 211h1v1h-1zM668 212h1v1h-1zM0 213h3v1h-3zM667 213h1v1h-1zM0 215h3v1h-3zM0 216h1v1h-1zM1 216h2v1h-2zM3 216h1v1h-1zM667 216h2v1h-2zM669 216h1v1h-1zM1 217h1v1h-1zM3 217h1v1h-1zM0 218h3v1h-3zM0 219h1v1h-1zM1 219h1v1h-1zM0 220h2v1h-2zM0 221h3v1h-3zM668 221h1v1h-1zM0 222h1v1h-1zM1 222h1v1h-1zM0 223h1v1h-1zM1 223h3v1h-3zM0 224h3v1h-3zM666 224h1v1h-1zM0 225h1v1h-1zM2 225h1v1h-1zM668 225h1v1h-1zM0 226h2v1h-2zM665 226h1v1h-1zM0 227h2v1h-2zM668 228h1v1h-1zM0 229h1v1h-1zM0 230h2v1h-2zM2 230h2v1h-2zM666 230h1v1h-1zM0 231h1v1h-1zM667 231h1v1h-1zM0 232h2v1h-2zM2 232h1v1h-1zM667 232h1v1h-1zM0 233h1v1h-1zM2 233h1v1h-1zM0 234h1v1h-1zM0 235h2v1h-2zM2 235h2v1h-2zM669 235h1v1h-1zM0 236h3v1h-3zM668 236h1v1h-1zM0 237h1v1h-1zM1 237h1v1h-1zM0 238h1v1h-1zM1 238h2v1h-2zM1 239h1v1h-1zM2 239h1v1h-1zM668 239h1v1h-1zM0 240h4v1h-4zM1 241h1v1h-1zM0 242h2v1h-2zM2 242h2v1h-2zM666 242h1v1h-1zM0 243h2v1h-2zM0 245h2v1h-2zM667 245h1v1h-1zM0 247h2v1h-2zM3 247h1v1h-1zM668 247h1v1h-1zM0 248h2v1h-2zM667 248h1v1h-1zM1 249h1v1h-1zM2 249h1v1h-1zM0 250h2v1h-2zM668 250h1v1h-1zM1 251h2v1h-2zM3 251h1v1h-1zM0 252h1v1h-1zM2 252h1v1h-1zM1 253h1v1h-1zM3 253h1v1h-1zM669 253h1v1h-1zM0 254h1v1h-1zM667 254h1v1h-1zM0 255h1v1h-1zM669 255h1v1h-1zM0 256h1v1h-1zM1 257h1v1h-1zM1 258h2v1h-2zM668 258h1v1h-1zM0 259h2v1h-2zM0 260h2v1h-2zM0 262h1v1h-1zM2 262h1v1h-1zM0 263h3v1h-3zM667 263h2v1h-2zM0 264h1v1h-1zM1 264h2v1h-2zM669 264h1v1h-1zM1 265h1v1h-1zM2 265h1v1h-1zM668 265h1v1h-1zM0 266h2v1h-2zM2 266h1v1h-1zM0 267h1v1h-1zM1 267h1v1h-1zM667 267h1v1h-1zM0 268h1v1h-1zM1 268h1v1h-1zM0 269h2v1h-2zM0 270h3v1h-3zM667 270h1v1h-1zM669 270h1v1h-1zM0 271h1v1h-1zM2 271h1v1h-1zM668 271h1v1h-1zM0 272h2v1h-2zM3 272h1v1h-1zM0 274h2v1h-2zM2 274h1v1h-1zM0 275h1v1h-1zM1 275h2v1h-2zM0 276h1v1h-1zM2 276h1v1h-1zM3 276h1v1h-1zM0 277h1v1h-1zM1 277h1v1h-1zM669 277h1v1h-1zM1 278h1v1h-1zM666 278h1v1h-1zM0 279h3v1h-3zM668 279h1v1h-1zM0 280h2v1h-2zM0 281h1v1h-1zM1 281h2v1h-2zM0 282h1v1h-1zM0 283h2v1h-2zM667 283h1v1h-1zM0 284h1v1h-1zM1 284h1v1h-1zM0 286h4v1h-4zM667 286h1v1h-1zM668 286h1v1h-1zM667 287h1v1h-1zM0 288h2v1h-2zM0 289h2v1h-2zM0 290h2v1h-2zM0 291h2v1h-2zM667 291h2v1h-2zM0 292h3v1h-3zM3 292h1v1h-1zM668 292h1v1h-1zM669 292h1v1h-1zM0 293h1v1h-1zM667 293h2v1h-2zM0 294h2v1h-2zM668 294h1v1h-1zM0 295h1v1h-1zM0 296h2v1h-2zM666 296h1v1h-1zM0 297h2v1h-2zM0 298h2v1h-2zM0 299h2v1h-2zM666 299h1v1h-1zM668 299h1v1h-1zM669 299h1v1h-1zM0 300h3v1h-3zM0 301h3v1h-3zM1 302h2v1h-2zM667 302h2v1h-2zM0 303h3v1h-3zM668 303h1v1h-1zM0 304h1v1h-1zM0 305h3v1h-3zM0 306h2v1h-2zM2 306h1v1h-1zM0 307h2v1h-2zM0 308h2v1h-2zM0 309h2v1h-2zM0 310h3v1h-3zM1 311h1v1h-1zM666 311h1v1h-1zM667 311h1v1h-1zM669 311h1v1h-1zM0 312h1v1h-1zM0 313h3v1h-3zM0 314h2v1h-2zM667 314h1v1h-1zM668 314h1v1h-1zM0 315h1v1h-1zM1 315h1v1h-1zM668 315h1v1h-1zM0 316h2v1h-2zM0 317h2v1h-2zM0 318h1v1h-1zM1 318h1v1h-1zM667 318h1v1h-1zM669 318h1v1h-1zM0 319h1v1h-1zM1 319h1v1h-1zM2 319h1v1h-1zM667 319h1v1h-1zM0 320h2v1h-2zM668 320h1v1h-1zM1 321h1v1h-1zM0 322h2v1h-2zM667 322h1v1h-1zM0 323h3v1h-3zM666 323h1v1h-1zM0 324h3v1h-3zM668 324h1v1h-1zM0 325h1v1h-1zM1 325h1v1h-1zM2 325h1v1h-1zM668 325h1v1h-1zM0 326h1v1h-1zM667 326h1v1h-1zM668 326h2v1h-2zM0 327h3v1h-3zM667 327h1v1h-1zM0 328h2v1h-2zM667 328h1v1h-1zM0 329h2v1h-2zM2 329h1v1h-1zM666 329h1v1h-1zM1 330h1v1h-1zM667 330h2v1h-2zM669 330h1v1h-1zM0 331h2v1h-2zM2 331h1v1h-1zM667 331h1v1h-1zM0 332h3v1h-3zM3 332h1v1h-1zM667 332h1v1h-1zM2 333h1v1h-1zM669 333h1v1h-1zM0 334h4v1h-4zM667 334h1v1h-1zM1 335h1v1h-1zM0 336h3v1h-3zM667 336h1v1h-1zM0 337h2v1h-2zM2 337h1v1h-1zM667 337h2v1h-2zM0 338h1v1h-1zM1 338h2v1h-2zM0 339h1v1h-1zM668 339h2v1h-2zM0 340h3v1h-3zM668 340h2v1h-2zM0 341h2v1h-2zM0 342h3v1h-3zM668 342h1v1h-1zM669 342h1v1h-1zM0 343h2v1h-2zM666 343h1v1h-1zM0 344h1v1h-1zM3 344h1v1h-1zM669 344h1v1h-1zM0 345h3v1h-3zM669 345h1v1h-1zM0 346h2v1h-2zM667 346h2v1h-2zM0 347h4v1h-4zM668 347h1v1h-1zM669 347h1v1h-1zM0 348h1v1h-1zM1 348h1v1h-1zM3 348h1v1h-1zM667 348h3v1h-3zM0 349h1v1h-1zM1 349h1v1h-1zM0 350h3v1h-3zM667 350h1v1h-1zM668 350h1v1h-1zM0 351h1v1h-1zM0 352h2v1h-2zM2 352h1v1h-1zM0 353h3v1h-3zM667 353h1v1h-1zM669 353h1v1h-1zM0 354h3v1h-3zM669 354h1v1h-1zM0 355h2v1h-2zM0 356h2v1h-2zM0 358h2v1h-2zM2 358h1v1h-1zM669 358h1v1h-1zM0 359h2v1h-2zM667 359h2v1h-2zM0 360h2v1h-2zM668 360h1v1h-1zM0 362h2v1h-2zM667 362h1v1h-1zM1 363h1v1h-1zM2 363h1v1h-1zM667 363h1v1h-1zM668 363h1v1h-1zM0 364h2v1h-2zM0 365h1v1h-1zM1 365h1v1h-1zM667 365h1v1h-1zM0 366h2v1h-2zM0 367h2v1h-2zM668 367h2v1h-2zM0 368h2v1h-2zM2 368h1v1h-1zM667 368h2v1h-2zM0 369h2v1h-2zM27 369h1v1h-1zM36 369h1v1h-1zM41 369h1v1h-1zM91 369h1v1h-1zM94 369h1v1h-1zM117 369h1v1h-1zM156 369h1v1h-1zM222 369h1v1h-1zM225 369h2v1h-2zM232 369h1v1h-1zM0 370h2v1h-2zM13 370h1v1h-1zM23 370h2v1h-2zM27 370h1v1h-1zM30 370h1v1h-1zM33 370h1v1h-1zM35 370h1v1h-1zM37 370h1v1h-1zM38 370h3v1h-3zM44 370h1v1h-1zM50 370h1v1h-1zM57 370h2v1h-2zM59 370h1v1h-1zM73 370h1v1h-1zM75 370h1v1h-1zM76 370h2v1h-2zM78 370h1v1h-1zM82 370h2v1h-2zM86 370h1v1h-1zM87 370h2v1h-2zM93 370h1v1h-1zM104 370h1v1h-1zM106 370h1v1h-1zM111 370h1v1h-1zM112 370h1v1h-1zM120 370h2v1h-2zM123 370h1v1h-1zM129 370h1v1h-1zM137 370h3v1h-3zM140 370h3v1h-3zM146 370h1v1h-1zM155 370h1v1h-1zM161 370h1v1h-1zM164 370h1v1h-1zM166 370h1v1h-1zM179 370h1v1h-1zM183 370h1v1h-1zM185 370h2v1h-2zM189 370h1v1h-1zM191 370h2v1h-2zM207 370h1v1h-1zM209 370h1v1h-1zM213 370h1v1h-1zM214 370h2v1h-2zM219 370h1v1h-1zM222 370h1v1h-1zM233 370h2v1h-2zM243 370h1v1h-1zM244 370h1v1h-1zM246 370h2v1h-2zM252 370h2v1h-2zM0 371h1v1h-1zM6 371h2v1h-2zM9 371h1v1h-1zM11 371h2v1h-2zM14 371h2v1h-2zM16 371h1v1h-1zM17 371h1v1h-1zM22 371h1v1h-1zM23 371h1v1h-1zM25 371h3v1h-3zM29 371h1v1h-1zM32 371h6v1h-6zM39 371h1v1h-1zM43 371h2v1h-2zM45 371h3v1h-3zM49 371h2v1h-2zM56 371h2v1h-2zM59 371h1v1h-1zM60 371h2v1h-2zM62 371h1v1h-1zM63 371h1v1h-1zM66 371h2v1h-2zM70 371h1v1h-1zM71 371h1v1h-1zM73 371h8v1h-8zM81 371h2v1h-2zM84 371h3v1h-3zM88 371h1v1h-1zM90 371h3v1h-3zM95 371h1v1h-1zM98 371h2v1h-2zM100 371h1v1h-1zM104 371h1v1h-1zM107 371h1v1h-1zM111 371h1v1h-1zM114 371h2v1h-2zM116 371h1v1h-1zM118 371h1v1h-1zM120 371h1v1h-1zM121 371h3v1h-3zM124 371h1v1h-1zM125 371h2v1h-2zM132 371h2v1h-2zM134 371h1v1h-1zM135 371h1v1h-1zM140 371h1v1h-1zM141 371h1v1h-1zM142 371h2v1h-2zM146 371h1v1h-1zM149 371h2v1h-2zM155 371h2v1h-2zM158 371h1v1h-1zM163 371h1v1h-1zM168 371h1v1h-1zM169 371h1v1h-1zM176 371h2v1h-2zM178 371h1v1h-1zM181 371h2v1h-2zM184 371h1v1h-1zM190 371h5v1h-5zM198 371h1v1h-1zM203 371h3v1h-3zM206 371h1v1h-1zM207 371h3v1h-3zM210 371h1v1h-1zM212 371h1v1h-1zM213 371h1v1h-1zM214 371h4v1h-4zM218 371h1v1h-1zM220 371h3v1h-3zM223 371h1v1h-1zM227 371h3v1h-3zM230 371h2v1h-2zM233 371h2v1h-2zM235 371h1v1h-1zM236 371h1v1h-1zM239 371h1v1h-1zM240 371h2v1h-2zM245 371h1v1h-1zM247 371h2v1h-2zM250 371h3v1h-3zM253 371h1v1h-1zM254 371h5v1h-5zM259 371h3v1h-3zM262 371h1v1h-1zM264 371h2v1h-2zM267 371h2v1h-2zM269 371h1v1h-1zM0 372h2v1h-2zM6 372h3v1h-3zM9 372h1v1h-1zM17 372h1v1h-1zM18 372h1v1h-1zM19 372h2v1h-2zM22 372h2v1h-2zM35 372h1v1h-1zM40 372h2v1h-2zM44 372h1v1h-1zM45 372h2v1h-2zM47 372h2v1h-2zM49 372h1v1h-1zM51 372h1v1h-1zM53 372h1v1h-1zM58 372h1v1h-1zM59 372h2v1h-2zM62 372h2v1h-2zM67 372h4v1h-4zM71 372h1v1h-1zM77 372h1v1h-1zM80 372h1v1h-1zM82 372h2v1h-2zM84 372h1v1h-1zM90 372h1v1h-1zM99 372h1v1h-1zM102 372h1v1h-1zM112 372h4v1h-4zM116 372h2v1h-2zM118 372h2v1h-2zM122 372h1v1h-1zM124 372h1v1h-1zM134 372h1v1h-1zM135 372h1v1h-1zM136 372h1v1h-1zM143 372h3v1h-3zM148 372h3v1h-3zM153 372h1v1h-1zM155 372h1v1h-1zM157 372h1v1h-1zM159 372h1v1h-1zM162 372h2v1h-2zM166 372h3v1h-3zM169 372h2v1h-2zM175 372h1v1h-1zM177 372h1v1h-1zM182 372h1v1h-1zM184 372h4v1h-4zM189 372h1v1h-1zM199 372h4v1h-4zM204 372h2v1h-2zM206 372h1v1h-1zM213 372h1v1h-1zM217 372h4v1h-4zM222 372h1v1h-1zM225 372h1v1h-1zM228 372h1v1h-1zM231 372h4v1h-4zM237 372h2v1h-2zM239 372h1v1h-1zM245 372h1v1h-1zM247 372h1v1h-1zM253 372h2v1h-2zM258 372h1v1h-1zM261 372h1v1h-1zM268 372h1v1h-1zM0 373h2v1h-2zM37 373h1v1h-1zM53 373h1v1h-1zM86 373h1v1h-1zM97 373h1v1h-1zM101 373h1v1h-1zM102 373h1v1h-1zM131 373h1v1h-1zM146 373h1v1h-1zM155 373h1v1h-1zM158 373h1v1h-1zM161 373h1v1h-1zM166 373h1v1h-1zM233 373h1v1h-1zM248 373h1v1h-1zM254 373h1v1h-1zM263 373h1v1h-1zM666 373h1v1h-1zM667 373h1v1h-1zM668 373h1v1h-1zM266 374h3v1h-3zM667 375h2v1h-2zM266 376h2v1h-2zM268 376h1v1h-1zM667 376h1v1h-1zM669 376h1v1h-1zM668 377h1v1h-1zM266 378h1v1h-1zM268 379h1v1h-1zM265 380h3v1h-3zM267 381h1v1h-1zM666 381h1v1h-1zM266 382h1v1h-1zM267 382h1v1h-1zM667 382h1v1h-1zM668 382h1v1h-1zM265 383h3v1h-3zM269 384h1v1h-1zM268 385h1v1h-1zM667 385h1v1h-1zM668 385h1v1h-1zM269 387h1v1h-1zM669 387h1v1h-1zM266 388h3v1h-3zM267 389h1v1h-1zM666 389h1v1h-1zM669 389h1v1h-1zM266 390h1v1h-1zM666 390h1v1h-1zM668 390h1v1h-1zM266 391h1v1h-1zM267 391h1v1h-1zM668 391h2v1h-2zM266 392h2v1h-2zM268 392h1v1h-1zM667 392h1v1h-1zM266 393h1v1h-1zM267 393h1v1h-1zM269 393h1v1h-1zM266 394h1v1h-1zM267 394h1v1h-1zM268 394h1v1h-1zM669 394h1v1h-1zM666 395h3v1h-3zM668 396h1v1h-1zM266 398h2v1h-2zM668 398h1v1h-1zM669 398h1v1h-1zM267 399h2v1h-2zM269 399h1v1h-1zM667 399h1v1h-1zM268 400h1v1h-1zM667 400h1v1h-1zM667 401h1v1h-1zM266 403h1v1h-1zM666 403h3v1h-3zM266 404h3v1h-3zM266 405h1v1h-1zM667 405h1v1h-1zM668 405h1v1h-1zM668 406h1v1h-1zM265 407h1v1h-1zM266 408h1v1h-1zM267 409h1v1h-1zM268 409h1v1h-1zM666 409h4v1h-4zM266 410h1v1h-1zM267 410h1v1h-1zM667 411h1v1h-1zM267 413h2v1h-2zM668 413h2v1h-2zM267 414h2v1h-2zM277 414h1v1h-1zM290 414h1v1h-1zM314 414h1v1h-1zM376 414h2v1h-2zM483 414h1v1h-1zM509 414h1v1h-1zM565 414h1v1h-1zM568 414h1v1h-1zM598 414h1v1h-1zM616 414h1v1h-1zM618 414h1v1h-1zM634 414h1v1h-1zM667 414h2v1h-2zM267 415h1v1h-1zM272 415h1v1h-1zM283 415h1v1h-1zM286 415h1v1h-1zM295 415h1v1h-1zM322 415h1v1h-1zM328 415h1v1h-1zM333 415h1v1h-1zM365 415h1v1h-1zM369 415h1v1h-1zM373 415h1v1h-1zM402 415h1v1h-1zM404 415h1v1h-1zM434 415h1v1h-1zM456 415h1v1h-1zM478 415h1v1h-1zM491 415h1v1h-1zM511 415h1v1h-1zM538 415h1v1h-1zM542 415h1v1h-1zM553 415h1v1h-1zM556 415h1v1h-1zM571 415h2v1h-2zM581 415h1v1h-1zM589 415h1v1h-1zM593 415h1v1h-1zM606 415h1v1h-1zM618 415h1v1h-1zM623 415h1v1h-1zM625 415h2v1h-2zM635 415h1v1h-1zM638 415h1v1h-1zM645 415h1v1h-1zM667 415h2v1h-2zM268 416h2v1h-2zM275 416h1v1h-1zM279 416h1v1h-1zM284 416h1v1h-1zM293 416h1v1h-1zM295 416h1v1h-1zM301 416h1v1h-1zM302 416h1v1h-1zM305 416h1v1h-1zM306 416h2v1h-2zM308 416h1v1h-1zM310 416h2v1h-2zM321 416h1v1h-1zM322 416h1v1h-1zM323 416h1v1h-1zM327 416h1v1h-1zM328 416h1v1h-1zM329 416h4v1h-4zM334 416h1v1h-1zM339 416h1v1h-1zM346 416h1v1h-1zM347 416h1v1h-1zM348 416h1v1h-1zM351 416h2v1h-2zM355 416h1v1h-1zM357 416h1v1h-1zM358 416h2v1h-2zM379 416h1v1h-1zM382 416h1v1h-1zM384 416h3v1h-3zM390 416h1v1h-1zM395 416h1v1h-1zM399 416h1v1h-1zM400 416h2v1h-2zM406 416h1v1h-1zM411 416h1v1h-1zM415 416h1v1h-1zM419 416h1v1h-1zM425 416h1v1h-1zM427 416h1v1h-1zM436 416h1v1h-1zM438 416h1v1h-1zM440 416h1v1h-1zM443 416h1v1h-1zM459 416h2v1h-2zM463 416h1v1h-1zM465 416h1v1h-1zM473 416h1v1h-1zM479 416h1v1h-1zM480 416h1v1h-1zM488 416h2v1h-2zM504 416h1v1h-1zM514 416h1v1h-1zM534 416h1v1h-1zM538 416h1v1h-1zM548 416h1v1h-1zM553 416h1v1h-1zM554 416h2v1h-2zM556 416h1v1h-1zM558 416h1v1h-1zM560 416h1v1h-1zM564 416h2v1h-2zM569 416h1v1h-1zM571 416h1v1h-1zM574 416h1v1h-1zM576 416h2v1h-2zM582 416h1v1h-1zM592 416h2v1h-2zM596 416h1v1h-1zM600 416h1v1h-1zM604 416h1v1h-1zM610 416h1v1h-1zM611 416h3v1h-3zM616 416h2v1h-2zM624 416h1v1h-1zM625 416h1v1h-1zM630 416h2v1h-2zM634 416h1v1h-1zM648 416h1v1h-1zM656 416h2v1h-2zM668 416h2v1h-2zM262 417h2v1h-2zM270 417h3v1h-3zM279 417h1v1h-1zM287 417h3v1h-3zM291 417h2v1h-2zM293 417h1v1h-1zM298 417h1v1h-1zM299 417h3v1h-3zM310 417h3v1h-3zM315 417h1v1h-1zM316 417h1v1h-1zM317 417h2v1h-2zM321 417h1v1h-1zM328 417h1v1h-1zM331 417h4v1h-4zM336 417h1v1h-1zM352 417h1v1h-1zM353 417h2v1h-2zM356 417h4v1h-4zM362 417h2v1h-2zM364 417h1v1h-1zM365 417h1v1h-1zM366 417h3v1h-3zM369 417h1v1h-1zM373 417h2v1h-2zM375 417h1v1h-1zM377 417h2v1h-2zM381 417h2v1h-2zM385 417h3v1h-3zM388 417h2v1h-2zM391 417h1v1h-1zM392 417h3v1h-3zM397 417h1v1h-1zM400 417h6v1h-6zM418 417h2v1h-2zM425 417h1v1h-1zM426 417h2v1h-2zM431 417h1v1h-1zM432 417h1v1h-1zM438 417h1v1h-1zM439 417h2v1h-2zM442 417h3v1h-3zM447 417h1v1h-1zM450 417h4v1h-4zM454 417h2v1h-2zM457 417h1v1h-1zM460 417h2v1h-2zM462 417h1v1h-1zM464 417h3v1h-3zM467 417h1v1h-1zM468 417h1v1h-1zM473 417h2v1h-2zM477 417h1v1h-1zM479 417h1v1h-1zM482 417h1v1h-1zM483 417h1v1h-1zM485 417h1v1h-1zM487 417h1v1h-1zM489 417h1v1h-1zM490 417h1v1h-1zM493 417h1v1h-1zM495 417h1v1h-1zM498 417h1v1h-1zM503 417h1v1h-1zM505 417h2v1h-2zM508 417h1v1h-1zM509 417h2v1h-2zM512 417h2v1h-2zM514 417h2v1h-2zM516 417h2v1h-2zM518 417h2v1h-2zM524 417h2v1h-2zM528 417h1v1h-1zM531 417h1v1h-1zM532 417h1v1h-1zM535 417h1v1h-1zM536 417h4v1h-4zM541 417h1v1h-1zM544 417h2v1h-2zM551 417h2v1h-2zM553 417h1v1h-1zM554 417h1v1h-1zM555 417h1v1h-1zM557 417h1v1h-1zM560 417h4v1h-4zM568 417h1v1h-1zM569 417h1v1h-1zM573 417h1v1h-1zM574 417h2v1h-2zM578 417h1v1h-1zM580 417h2v1h-2zM586 417h3v1h-3zM589 417h2v1h-2zM593 417h1v1h-1zM595 417h1v1h-1zM597 417h2v1h-2zM601 417h3v1h-3zM605 417h3v1h-3zM608 417h1v1h-1zM612 417h2v1h-2zM614 417h1v1h-1zM615 417h1v1h-1zM617 417h1v1h-1zM621 417h1v1h-1zM625 417h4v1h-4zM635 417h1v1h-1zM636 417h2v1h-2zM639 417h1v1h-1zM647 417h1v1h-1zM648 417h2v1h-2zM653 417h2v1h-2zM655 417h2v1h-2zM661 417h1v1h-1zM663 417h3v1h-3zM264 418h1v1h-1zM267 418h3v1h-3zM274 418h3v1h-3zM283 418h4v1h-4zM287 418h5v1h-5zM294 418h6v1h-6zM304 418h4v1h-4zM308 418h4v1h-4zM312 418h3v1h-3zM315 418h4v1h-4zM320 418h1v1h-1zM321 418h2v1h-2zM323 418h1v1h-1zM326 418h3v1h-3zM330 418h1v1h-1zM335 418h2v1h-2zM337 418h1v1h-1zM338 418h1v1h-1zM339 418h1v1h-1zM340 418h1v1h-1zM341 418h1v1h-1zM342 418h1v1h-1zM344 418h1v1h-1zM347 418h1v1h-1zM354 418h2v1h-2zM357 418h1v1h-1zM358 418h4v1h-4zM363 418h3v1h-3zM366 418h1v1h-1zM367 418h4v1h-4zM375 418h3v1h-3zM378 418h1v1h-1zM380 418h2v1h-2zM385 418h1v1h-1zM387 418h2v1h-2zM391 418h4v1h-4zM397 418h1v1h-1zM399 418h1v1h-1zM400 418h3v1h-3zM406 418h2v1h-2zM410 418h1v1h-1zM411 418h1v1h-1zM420 418h2v1h-2zM426 418h1v1h-1zM427 418h1v1h-1zM429 418h3v1h-3zM445 418h4v1h-4zM449 418h3v1h-3zM453 418h1v1h-1zM454 418h2v1h-2zM457 418h1v1h-1zM458 418h1v1h-1zM460 418h2v1h-2zM463 418h5v1h-5zM469 418h1v1h-1zM471 418h1v1h-1zM474 418h1v1h-1zM475 418h2v1h-2zM477 418h3v1h-3zM480 418h1v1h-1zM481 418h4v1h-4zM491 418h2v1h-2zM495 418h2v1h-2zM497 418h11v1h-11zM511 418h1v1h-1zM514 418h1v1h-1zM516 418h1v1h-1zM517 418h4v1h-4zM521 418h2v1h-2zM525 418h1v1h-1zM531 418h1v1h-1zM532 418h1v1h-1zM533 418h1v1h-1zM537 418h1v1h-1zM538 418h2v1h-2zM542 418h1v1h-1zM544 418h2v1h-2zM546 418h1v1h-1zM548 418h1v1h-1zM552 418h3v1h-3zM557 418h2v1h-2zM559 418h1v1h-1zM561 418h1v1h-1zM562 418h1v1h-1zM563 418h5v1h-5zM570 418h2v1h-2zM574 418h4v1h-4zM580 418h1v1h-1zM585 418h1v1h-1zM586 418h1v1h-1zM587 418h2v1h-2zM591 418h1v1h-1zM594 418h3v1h-3zM599 418h1v1h-1zM605 418h1v1h-1zM606 418h2v1h-2zM610 418h2v1h-2zM612 418h4v1h-4zM617 418h2v1h-2zM619 418h4v1h-4zM623 418h1v1h-1zM624 418h1v1h-1zM628 418h6v1h-6zM634 418h2v1h-2zM636 418h4v1h-4zM640 418h4v1h-4zM644 418h2v1h-2zM648 418h1v1h-1zM654 418h1v1h-1zM656 418h2v1h-2zM658 418h1v1h-1zM661 418h8v1h-8zM669 418h1v1h-1zM262 419h9v1h-9zM272 419h2v1h-2zM276 419h1v1h-1zM277 419h1v1h-1zM278 419h2v1h-2zM280 419h1v1h-1zM282 419h7v1h-7zM290 419h1v1h-1zM293 419h1v1h-1zM298 419h3v1h-3zM302 419h1v1h-1zM305 419h8v1h-8zM313 419h2v1h-2zM317 419h6v1h-6zM324 419h4v1h-4zM328 419h1v1h-1zM330 419h3v1h-3zM333 419h1v1h-1zM335 419h14v1h-14zM350 419h1v1h-1zM352 419h1v1h-1zM355 419h3v1h-3zM359 419h4v1h-4zM366 419h2v1h-2zM368 419h2v1h-2zM371 419h1v1h-1zM372 419h1v1h-1zM373 419h2v1h-2zM376 419h3v1h-3zM380 419h7v1h-7zM388 419h1v1h-1zM389 419h2v1h-2zM391 419h2v1h-2zM395 419h3v1h-3zM398 419h1v1h-1zM401 419h2v1h-2zM403 419h3v1h-3zM406 419h2v1h-2zM409 419h3v1h-3zM412 419h1v1h-1zM413 419h5v1h-5zM419 419h2v1h-2zM421 419h4v1h-4zM429 419h4v1h-4zM433 419h3v1h-3zM436 419h2v1h-2zM440 419h2v1h-2zM442 419h1v1h-1zM443 419h1v1h-1zM445 419h2v1h-2zM448 419h1v1h-1zM449 419h3v1h-3zM454 419h3v1h-3zM457 419h5v1h-5zM463 419h2v1h-2zM465 419h2v1h-2zM468 419h1v1h-1zM469 419h2v1h-2zM472 419h4v1h-4zM478 419h1v1h-1zM479 419h5v1h-5zM486 419h1v1h-1zM487 419h2v1h-2zM491 419h4v1h-4zM495 419h1v1h-1zM496 419h7v1h-7zM504 419h3v1h-3zM516 419h9v1h-9zM526 419h1v1h-1zM527 419h5v1h-5zM533 419h1v1h-1zM534 419h5v1h-5zM539 419h1v1h-1zM540 419h1v1h-1zM541 419h1v1h-1zM543 419h3v1h-3zM547 419h2v1h-2zM556 419h3v1h-3zM559 419h5v1h-5zM565 419h1v1h-1zM566 419h2v1h-2zM568 419h2v1h-2zM570 419h1v1h-1zM573 419h3v1h-3zM576 419h2v1h-2zM579 419h7v1h-7zM586 419h3v1h-3zM589 419h7v1h-7zM596 419h5v1h-5zM604 419h1v1h-1zM610 419h1v1h-1zM612 419h2v1h-2zM614 419h3v1h-3zM617 419h3v1h-3zM620 419h4v1h-4zM624 419h2v1h-2zM626 419h2v1h-2zM629 419h3v1h-3zM634 419h3v1h-3zM642 419h2v1h-2zM645 419h4v1h-4zM650 419h5v1h-5zM655 419h2v1h-2zM658 419h1v1h-1zM659 419h1v1h-1zM660 419h2v1h-2zM664 419h2v1h-2zM666 419h2v1h-2zM668 419h2v1h-2z" fill="#fff"/></svg>
<div class="w" style="left:4px;top:5px;width:2408px;height:1424px;border-radius:12px 12px 0 12px">
<div class="b" style="left:0.00px;top:0.00px;width:2408.00px;height:1424.00px;background:#fff;"></div>
<div class="b" style="left:0.00px;top:0.00px;width:2408.00px;height:52.00px;background:#121a2c;"></div>
<span class="t" style="left:28.00px;top:11.52px;font-size:28.80px;line-height:28.80px;color:#fff;transform-origin:0 50%;transform:scaleX(0.9427);font-weight:bold;">unqork</span>
<div class="b" style="left:136.00px;top:12.00px;width:2.00px;height:28.00px;background:#7a8296;"></div>
<div class="b" style="left:152.00px;top:12.80px;width:25.60px;height:25.60px;background:#fff;border-radius:16px;"></div>
<span class="t" style="left:158.40px;top:14.92px;font-size:20.00px;line-height:20.00px;color:#121a2c;font-weight:bold;">U</span>
<span class="t" style="left:182.00px;top:15.82px;font-size:19.20px;line-height:19.20px;color:#e8ebf2;letter-spacing:-0.387px;transform-origin:0 50%;transform:scaleX(0.8600);-webkit-text-stroke:0.40px #e8ebf2;font-weight:bold;">Designer</span>
<svg class="b" style="left:1428.00px;top:12.00px;" width="28.00" height="28.00" viewBox="0 0 7.00 7.00"><circle cx="3" cy="3" r="2" fill="none" stroke="#fff" stroke-width="0.8"/><path d="M4.5 4.5L6.3 6.3" stroke="#fff" stroke-width="0.8"/></svg>
<span class="t" style="left:1496.00px;top:16.22px;font-size:18.40px;line-height:18.40px;color:#fff;letter-spacing:-0.571px;transform-origin:0 50%;transform:scaleX(0.8600);-webkit-text-stroke:0.40px #fff;font-weight:bold;">Home</span>
<span class="t" style="left:1580.00px;top:16.22px;font-size:18.40px;line-height:18.40px;color:#fff;letter-spacing:-0.203px;transform-origin:0 50%;transform:scaleX(0.8600);-webkit-text-stroke:0.40px #fff;font-weight:bold;">Workspaces</span>
<span class="t" style="left:1714.00px;top:16.22px;font-size:18.40px;line-height:18.40px;color:#fff;transform-origin:0 50%;transform:scaleX(0.8657);-webkit-text-stroke:0.40px #fff;font-weight:bold;">Library</span>
<span class="t" style="left:1836.80px;top:16.22px;font-size:18.40px;line-height:18.40px;color:#fff;letter-spacing:-0.029px;transform-origin:0 50%;transform:scaleX(0.8600);-webkit-text-stroke:0.40px #fff;font-weight:bold;">Marketplace</span>
<span class="t" style="left:1972.00px;top:16.22px;font-size:18.40px;line-height:18.40px;color:#fff;letter-spacing:-0.894px;transform-origin:0 50%;transform:scaleX(0.8600);-webkit-text-stroke:0.40px #fff;font-weight:bold;">Resources</span>
<span class="t" style="left:2120.00px;top:16.22px;font-size:18.40px;line-height:18.40px;color:#fff;letter-spacing:-0.137px;transform-origin:0 50%;transform:scaleX(0.8600);-webkit-text-stroke:0.40px #fff;font-weight:bold;">Administration</span>
<svg class="b" style="left:1778.00px;top:23.20px;" width="12.00" height="8.00" viewBox="0 0 3.00 2.00"><path d="M0 0h3l-1.5 2z" fill="#fff"/></svg>
<svg class="b" style="left:2060.40px;top:23.20px;" width="12.00" height="8.00" viewBox="0 0 3.00 2.00"><path d="M0 0h3l-1.5 2z" fill="#fff"/></svg>
<svg class="b" style="left:2268.00px;top:10.00px;" width="28.00" height="32.00" viewBox="0 0 7.00 8.00"><path d="M3.5 0.8c-1.5 0-2.3 1.1-2.3 2.6v1.7l-0.7 0.9h6l-0.7-0.9v-1.7c0-1.5-0.8-2.6-2.3-2.6z" fill="#fff"/><circle cx="3.5" cy="6.7" r="0.7" fill="#fff"/></svg>
<div class="b" style="left:2336.00px;top:12.00px;width:28.00px;height:28.00px;background:#1f4fc4;border-radius:16px;"></div>
<span class="t" style="left:2342.40px;top:21.92px;font-size:12.00px;line-height:12.00px;color:#fff;transform-origin:0 50%;transform:scaleX(0.9909);font-weight:bold;">JC</span>
<div class="b" style="left:0.00px;top:52.00px;width:2408.00px;height:76.00px;background:#fff;"></div>
<div class="b" style="left:0.00px;top:128.00px;width:2408.00px;height:2.40px;background:#e3e8ef;"></div>
<span class="t" style="left:28.00px;top:80.22px;font-size:18.40px;line-height:18.40px;color:#3c4555;transform-origin:0 50%;transform:scaleX(0.8644);">New Case Management APP</span>
<span class="t" style="left:244.00px;top:80.22px;font-size:18.40px;line-height:18.40px;color:#6b7484;">&gt;</span>
<span class="t" style="left:266.00px;top:80.22px;font-size:18.40px;line-height:18.40px;color:#3c4555;transform-origin:0 50%;transform:scaleX(0.8669);">New Case Mgmt Flow</span>
<span class="t" style="left:434.00px;top:80.22px;font-size:18.40px;line-height:18.40px;color:#6b7484;">&gt;</span>
<div class="b" style="left:456.00px;top:74.40px;width:28.00px;height:28.00px;background:#1f3f93;border-radius:16px;"></div>
<span class="t" style="left:462.40px;top:82.32px;font-size:11.20px;line-height:11.20px;color:#fff;transform-origin:0 50%;transform:scaleX(1.0620);font-weight:bold;">FE</span>
<span class="t" style="left:498.00px;top:80.92px;font-size:18.00px;line-height:18.00px;color:#1b2332;letter-spacing:-0.059px;transform-origin:0 50%;transform:scaleX(0.8600);-webkit-text-stroke:0.40px #1b2332;font-weight:bold;">KPI Dashboard - Case Management Temp...</span>
<svg class="b" style="left:822.00px;top:80.00px;" width="20.00" height="20.00" viewBox="0 0 5.00 5.00"><path d="M2.5 0.3l0.7 1.5 1.6 0.2-1.2 1.1 0.3 1.6-1.4-0.8-1.4 0.8 0.3-1.6-1.2-1.1 1.6-0.2z" fill="#f3c23c" stroke="#d9a21b" stroke-width="0.3"/></svg>
<svg class="b" style="left:1614.00px;top:80.00px;" width="16.00" height="16.00" viewBox="0 0 4.00 4.00"><circle cx="2" cy="2" r="1.5" fill="none" stroke="#6b7484" stroke-width="0.5"/><path d="M2 1.1v1h0.8" stroke="#6b7484" stroke-width="0.4" fill="none"/></svg>
<span class="t" style="left:1644.00px;top:80.22px;font-size:18.40px;line-height:18.40px;color:#4a5364;transform-origin:0 50%;transform:scaleX(0.9298);">Last saved 6 months ago by</span>
<svg class="b" style="left:1896.00px;top:80.00px;" width="20.00" height="16.00" viewBox="0 0 5.00 4.00"><ellipse cx="2.5" cy="2" rx="2.1" ry="1.4" fill="none" stroke="#1f6fa8" stroke-width="0.6"/><circle cx="2.5" cy="2" r="0.7" fill="#1f6fa8"/></svg>
<span class="t" style="left:1924.00px;top:80.22px;font-size:18.40px;line-height:18.40px;color:#1f5f9a;letter-spacing:-0.250px;transform-origin:0 50%;transform:scaleX(0.8600);-webkit-text-stroke:0.40px #1f5f9a;font-weight:bold;">Viewing</span>
<svg class="b" style="left:1996.00px;top:84.80px;" width="12.00" height="8.00" viewBox="0 0 3.00 2.00"><path d="M0.3 0.3h2.4l-1.2 1.5z" fill="#5b8fc0"/></svg>
<div class="b" style="left:2032.00px;top:73.60px;width:41.60px;height:36.00px;background:#fff;border:2.20px solid #c7d9e8;border-radius:6.0px;box-sizing:border-box;"></div>
<span class="t" style="left:2043.20px;top:80.22px;font-size:18.40px;line-height:18.40px;color:#3a5f86;font-weight:bold;">···</span>
<div class="b" style="left:2086.40px;top:73.60px;width:39.20px;height:36.00px;background:#fff;border:2.20px solid #c7d9e8;border-radius:6.0px;box-sizing:border-box;"></div>
<div class="b" style="left:2101.20px;top:85.60px;width:10.40px;height:11.20px;background:#2c5d8f;border-radius:1.6px;"></div>
<div class="b" style="left:2104.40px;top:88.80px;width:4.00px;height:4.80px;background:#fff;"></div>
<div class="b" style="left:2137.60px;top:73.60px;width:124.80px;height:36.00px;background:#fff;border:2.20px solid #c7d9e8;border-radius:6.0px;box-sizing:border-box;"></div>
<div class="b" style="left:2222.40px;top:73.60px;width:2.00px;height:36.00px;background:#cfe0ee;"></div>
<span class="t" style="left:2156.00px;top:84.92px;font-size:18.00px;line-height:18.00px;color:#1f5f9a;letter-spacing:-1.083px;transform-origin:0 50%;transform:scaleX(0.8600);-webkit-text-stroke:0.40px #1f5f9a;font-weight:bold;">Preview</span>
<svg class="b" style="left:2236.80px;top:88.00px;" width="11.20" height="8.00" viewBox="0 0 2.80 2.00"><path d="M0.3 0.3h2.2l-1.1 1.4z" fill="#6c8fb3"/></svg>
<div class="b" style="left:2272.00px;top:73.60px;width:104.80px;height:36.00px;background:#fff;border:2.20px solid #c7d9e8;border-radius:6.0px;box-sizing:border-box;"></div>
<div class="b" style="left:2336.00px;top:73.60px;width:2.00px;height:36.00px;background:#cfe0ee;"></div>
<span class="t" style="left:2290.00px;top:84.92px;font-size:18.00px;line-height:18.00px;color:#2a3342;letter-spacing:-0.626px;transform-origin:0 50%;transform:scaleX(0.8600);-webkit-text-stroke:0.40px #2a3342;font-weight:bold;">Save</span>
<svg class="b" style="left:2351.20px;top:88.00px;" width="11.20" height="8.00" viewBox="0 0 2.80 2.00"><path d="M0.3 0.3h2.2l-1.1 1.4z" fill="#6c8fb3"/></svg>
<div class="b" style="left:0.00px;top:130.40px;width:348.00px;height:1289.60px;background:#fff;"></div>
<div class="b" style="left:347.20px;top:130.40px;width:4.80px;height:1289.60px;background:#dfe6ee;"></div>
<span class="t" style="left:48.00px;top:148.22px;font-size:18.40px;line-height:18.40px;color:#1b2332;transform-origin:0 50%;transform:scaleX(0.9071);-webkit-text-stroke:0.40px #1b2332;font-weight:bold;">Components</span>
<div class="b" style="left:32.00px;top:178.80px;width:132.00px;height:4.80px;background:#178f9b;"></div>
<span class="t" style="left:196.00px;top:148.22px;font-size:18.40px;line-height:18.40px;color:#2a3342;transform-origin:0 50%;transform:scaleX(0.9511);font-weight:bold;">Outline (264)</span>
<div class="b" style="left:20.00px;top:204.00px;width:310.00px;height:50.00px;background:#fff;border:2.40px solid #aab4c2;border-radius:6.0px;box-sizing:border-box;"></div>
<svg class="b" style="left:30.00px;top:218.00px;" width="22.00" height="22.00" viewBox="0 0 5.50 5.50"><circle cx="2.2" cy="2.2" r="1.6" fill="none" stroke="#1b2332" stroke-width="0.8"/><path d="M3.4 3.4L5 5" stroke="#1b2332" stroke-width="0.8"/></svg>
<span class="t" style="left:80.00px;top:221.12px;font-size:17.60px;line-height:17.60px;color:#6b7484;transform-origin:0 50%;transform:scaleX(0.9847);">Search Components</span>
<div class="b" style="left:20.00px;top:269.20px;width:310.00px;height:36.00px;background:#fff;border:2.40px solid #c9dbe9;border-radius:6.0px;box-sizing:border-box;"></div>
<span class="t" style="left:104.00px;top:277.12px;font-size:17.60px;line-height:17.60px;color:#1f5f9a;transform-origin:0 50%;transform:scaleX(0.8856);-webkit-text-stroke:0.40px #1f5f9a;font-weight:bold;">Default Library</span>
<svg class="b" style="left:226.00px;top:283.20px;" width="14.00" height="9.60" viewBox="0 0 3.50 2.40"><path d="M0.3 0.3h2.6l-1.3 1.7z" fill="#1f5f9a"/></svg>
<div class="b" style="left:20.00px;top:344.00px;width:310.00px;height:2.00px;background:#e3e8ef;"></div>
<span class="t" style="left:28.00px;top:368.22px;font-size:18.40px;line-height:18.40px;color:#1b2332;transform-origin:0 50%;transform:scaleX(0.9295);-webkit-text-stroke:0.40px #1b2332;font-weight:bold;">Frequently Used</span>
<svg class="b" style="left:304.00px;top:370.00px;" width="16.00" height="10.40" viewBox="0 0 4.00 2.60"><path d="M0.5 0.4L2 1.9L3.5 0.4" fill="none" stroke="#2a3342" stroke-width="0.75"/></svg>
<div class="b" style="left:20.00px;top:398.00px;width:310.00px;height:49.60px;background:#fff;border:2.40px solid #c9dbe9;border-radius:6.0px;box-sizing:border-box;"></div>
<svg class="b" style="left:36.40px;top:413.60px;" width="20.00" height="18.40" viewBox="0 0 5.00 4.60"><rect x="0.6" y="1" width="3.8" height="3" rx="0.5" fill="none" stroke="#1d5a8c" stroke-width="0.6"/><path d="M1.5 1V0.5h2V1" fill="none" stroke="#1d5a8c" stroke-width="0.5"/></svg>
<span class="t" style="left:70.00px;top:413.12px;font-size:17.60px;line-height:17.60px;color:#163d63;letter-spacing:-0.146px;transform-origin:0 50%;transform:scaleX(0.8600);-webkit-text-stroke:0.40px #163d63;font-weight:bold;">Button</span>
<svg class="b" style="left:304.00px;top:414.00px;" width="12.00" height="17.60" viewBox="0 0 3.00 4.40"><path d="M0.3 0.5h2.4M0.3 1.6h2.4M0.3 2.7h2.4M0.3 3.8h2.4" stroke="#9db1c4" stroke-width="0.5" stroke-dasharray="0.9 0.5"/></svg>
<div class="b" style="left:20.00px;top:460.72px;width:310.00px;height:49.60px;background:#fff;border:2.40px solid #c9dbe9;border-radius:6.0px;box-sizing:border-box;"></div>
<svg class="b" style="left:36.40px;top:476.32px;" width="20.00" height="18.40" viewBox="0 0 5.00 4.60"><rect x="0.8" y="0.3" width="3.4" height="4" rx="0.6" fill="#1d5a8c"/><rect x="1.4" y="0.9" width="2.2" height="0.9" fill="#fff"/><path d="M1.4 2.6h0.6M2.3 2.6h0.6M3.1 2.6h0.5M1.4 3.5h0.6M2.3 3.5h0.6" stroke="#fff" stroke-width="0.4"/></svg>
<span class="t" style="left:70.00px;top:477.12px;font-size:17.60px;line-height:17.60px;color:#163d63;letter-spacing:-0.002px;transform-origin:0 50%;transform:scaleX(0.8600);-webkit-text-stroke:0.40px #163d63;font-weight:bold;">Calculator</span>
<svg class="b" style="left:304.00px;top:476.72px;" width="12.00" height="17.60" viewBox="0 0 3.00 4.40"><path d="M0.3 0.5h2.4M0.3 1.6h2.4M0.3 2.7h2.4M0.3 3.8h2.4" stroke="#9db1c4" stroke-width="0.5" stroke-dasharray="0.9 0.5"/></svg>
<div class="b" style="left:20.00px;top:523.44px;width:310.00px;height:49.60px;background:#fff;border:2.40px solid #c9dbe9;border-radius:6.0px;box-sizing:border-box;"></div>
<svg class="b" style="left:36.40px;top:539.04px;" width="20.00" height="18.40" viewBox="0 0 5.00 4.60"><rect x="0.6" y="0.9" width="3.8" height="3.1" rx="0.5" fill="none" stroke="#1d5a8c" stroke-width="0.6"/><path d="M2.5 0.9v3.1M0.6 1.7h3.8" stroke="#1d5a8c" stroke-width="0.5"/></svg>
<span class="t" style="left:70.00px;top:541.12px;font-size:17.60px;line-height:17.60px;color:#163d63;transform-origin:0 50%;transform:scaleX(0.8766);-webkit-text-stroke:0.40px #163d63;font-weight:bold;">Columns</span>
<svg class="b" style="left:304.00px;top:539.44px;" width="12.00" height="17.60" viewBox="0 0 3.00 4.40"><path d="M0.3 0.5h2.4M0.3 1.6h2.4M0.3 2.7h2.4M0.3 3.8h2.4" stroke="#9db1c4" stroke-width="0.5" stroke-dasharray="0.9 0.5"/></svg>
<div class="b" style="left:20.00px;top:586.16px;width:310.00px;height:49.60px;background:#fff;border:2.40px solid #c9dbe9;border-radius:6.0px;box-sizing:border-box;"></div>
<svg class="b" style="left:36.40px;top:601.76px;" width="20.00" height="18.40" viewBox="0 0 5.00 4.60"><circle cx="2.5" cy="2.3" r="1.1" fill="none" stroke="#1d5a8c" stroke-width="0.7"/><path d="M2.5 0.3v4M0.5 2.3h4" stroke="#1d5a8c" stroke-width="0.6"/></svg>
<span class="t" style="left:66.00px;top:601.12px;font-size:17.60px;line-height:17.60px;color:#163d63;transform-origin:0 50%;transform:scaleX(0.8859);-webkit-text-stroke:0.40px #163d63;font-weight:bold;">Data Workflow</span>
<svg class="b" style="left:304.00px;top:602.16px;" width="12.00" height="17.60" viewBox="0 0 3.00 4.40"><path d="M0.3 0.5h2.4M0.3 1.6h2.4M0.3 2.7h2.4M0.3 3.8h2.4" stroke="#9db1c4" stroke-width="0.5" stroke-dasharray="0.9 0.5"/></svg>
<div class="b" style="left:20.00px;top:648.88px;width:310.00px;height:49.60px;background:#fff;border:2.40px solid #c9dbe9;border-radius:6.0px;box-sizing:border-box;"></div>
<svg class="b" style="left:36.40px;top:664.48px;" width="20.00" height="18.40" viewBox="0 0 5.00 4.60"><rect x="1.9" y="0.4" width="1.2" height="1.2" fill="#1d5a8c"/><rect x="0.5" y="3" width="1.2" height="1.2" fill="#1d5a8c"/><rect x="3.3" y="3" width="1.2" height="1.2" fill="#1d5a8c"/><path d="M2.5 1.6v0.8M1.1 3V2.4h2.8V3" fill="none" stroke="#1d5a8c" stroke-width="0.4"/></svg>
<span class="t" style="left:70.00px;top:665.12px;font-size:17.60px;line-height:17.60px;color:#163d63;transform-origin:0 50%;transform:scaleX(0.8659);-webkit-text-stroke:0.40px #163d63;font-weight:bold;">Decisions</span>
<svg class="b" style="left:304.00px;top:664.88px;" width="12.00" height="17.60" viewBox="0 0 3.00 4.40"><path d="M0.3 0.5h2.4M0.3 1.6h2.4M0.3 2.7h2.4M0.3 3.8h2.4" stroke="#9db1c4" stroke-width="0.5" stroke-dasharray="0.9 0.5"/></svg>
<div class="b" style="left:20.00px;top:711.60px;width:310.00px;height:49.60px;background:#fff;border:2.40px solid #c9dbe9;border-radius:6.0px;box-sizing:border-box;"></div>
<svg class="b" style="left:36.40px;top:727.20px;" width="20.00" height="18.40" viewBox="0 0 5.00 4.60"><path d="M1.8 0.4h1.4l0.3 1.7h0.7l0.5 2.3h-4.4l0.5-2.3h0.7z" fill="#1d5a8c"/><rect x="1.7" y="2.8" width="1.6" height="0.8" fill="#fff"/></svg>
<span class="t" style="left:70.00px;top:729.12px;font-size:17.60px;line-height:17.60px;color:#163d63;transform-origin:0 50%;transform:scaleX(0.8719);-webkit-text-stroke:0.40px #163d63;font-weight:bold;">Hidden</span>
<svg class="b" style="left:304.00px;top:727.60px;" width="12.00" height="17.60" viewBox="0 0 3.00 4.40"><path d="M0.3 0.5h2.4M0.3 1.6h2.4M0.3 2.7h2.4M0.3 3.8h2.4" stroke="#9db1c4" stroke-width="0.5" stroke-dasharray="0.9 0.5"/></svg>
<div class="b" style="left:20.00px;top:774.32px;width:310.00px;height:49.60px;background:#fff;border:2.40px solid #c9dbe9;border-radius:6.0px;box-sizing:border-box;"></div>
<svg class="b" style="left:36.40px;top:789.92px;" width="20.00" height="18.40" viewBox="0 0 5.00 4.60"><path d="M1.5 1.3L0.5 2.3l1 1M3.5 1.3l1 1-1 1M2.8 0.9L2.2 3.7" fill="none" stroke="#1d5a8c" stroke-width="0.5"/></svg>
<span class="t" style="left:70.00px;top:789.12px;font-size:17.60px;line-height:17.60px;color:#163d63;transform-origin:0 50%;transform:scaleX(0.8695);-webkit-text-stroke:0.40px #163d63;font-weight:bold;">HTML Element</span>
<svg class="b" style="left:304.00px;top:790.32px;" width="12.00" height="17.60" viewBox="0 0 3.00 4.40"><path d="M0.3 0.5h2.4M0.3 1.6h2.4M0.3 2.7h2.4M0.3 3.8h2.4" stroke="#9db1c4" stroke-width="0.5" stroke-dasharray="0.9 0.5"/></svg>
<div class="b" style="left:20.00px;top:837.04px;width:310.00px;height:49.60px;background:#fff;border:2.40px solid #c9dbe9;border-radius:6.0px;box-sizing:border-box;"></div>
<svg class="b" style="left:36.40px;top:852.64px;" width="20.00" height="18.40" viewBox="0 0 5.00 4.60"><path d="M0.6 1h3.8M0.6 2.3h3.8M0.6 3.6h3.8" stroke="#1d5a8c" stroke-width="0.5"/><rect x="1.3" y="0.4" width="0.9" height="1.2" fill="#1d5a8c"/><rect x="2.9" y="3" width="0.9" height="1.2" fill="#1d5a8c"/><rect x="1.9" y="1.7" width="0.9" height="1.2" fill="#1d5a8c"/></svg>
<span class="t" style="left:70.00px;top:853.12px;font-size:17.60px;line-height:17.60px;color:#163d63;transform-origin:0 50%;transform:scaleX(0.8914);-webkit-text-stroke:0.40px #163d63;font-weight:bold;">Initializer</span>
<svg class="b" style="left:304.00px;top:853.04px;" width="12.00" height="17.60" viewBox="0 0 3.00 4.40"><path d="M0.3 0.5h2.4M0.3 1.6h2.4M0.3 2.7h2.4M0.3 3.8h2.4" stroke="#9db1c4" stroke-width="0.5" stroke-dasharray="0.9 0.5"/></svg>
<div class="b" style="left:20.00px;top:899.76px;width:310.00px;height:49.60px;background:#fff;border:2.40px solid #c9dbe9;border-radius:6.0px;box-sizing:border-box;"></div>
<svg class="b" style="left:36.40px;top:915.36px;" width="20.00" height="18.40" viewBox="0 0 5.00 4.60"><rect x="0.6" y="0.8" width="3.8" height="3.1" rx="0.3" fill="none" stroke="#1d5a8c" stroke-width="0.6"/><path d="M1.4 1.8h2.2M1.4 2.8h2.2" stroke="#1d5a8c" stroke-width="0.45"/></svg>
<span class="t" style="left:70.00px;top:917.12px;font-size:17.60px;line-height:17.60px;color:#163d63;transform-origin:0 50%;transform:scaleX(0.8944);-webkit-text-stroke:0.40px #163d63;font-weight:bold;">Panel</span>
<svg class="b" style="left:304.00px;top:915.76px;" width="12.00" height="17.60" viewBox="0 0 3.00 4.40"><path d="M0.3 0.5h2.4M0.3 1.6h2.4M0.3 2.7h2.4M0.3 3.8h2.4" stroke="#9db1c4" stroke-width="0.5" stroke-dasharray="0.9 0.5"/></svg>
<div class="b" style="left:20.00px;top:962.48px;width:310.00px;height:49.60px;background:#fff;border:2.40px solid #c9dbe9;border-radius:6.0px;box-sizing:border-box;"></div>
<svg class="b" style="left:36.40px;top:978.08px;" width="20.00" height="18.40" viewBox="0 0 5.00 4.60"><rect x="0.6" y="0.6" width="3.6" height="3.6" rx="0.6" fill="none" stroke="#1d5a8c" stroke-width="0.6"/><path d="M1.6 3.2L3.2 1.6M2.1 1.5h1.2v1.2" stroke="#1d5a8c" stroke-width="0.5" fill="none"/></svg>
<span class="t" style="left:70.00px;top:977.12px;font-size:17.60px;line-height:17.60px;color:#163d63;transform-origin:0 50%;transform:scaleX(0.8720);-webkit-text-stroke:0.40px #163d63;font-weight:bold;">Plug-In</span>
<svg class="b" style="left:304.00px;top:978.48px;" width="12.00" height="17.60" viewBox="0 0 3.00 4.40"><path d="M0.3 0.5h2.4M0.3 1.6h2.4M0.3 2.7h2.4M0.3 3.8h2.4" stroke="#9db1c4" stroke-width="0.5" stroke-dasharray="0.9 0.5"/></svg>
<div class="b" style="left:20.00px;top:1025.20px;width:310.00px;height:49.60px;background:#fff;border:2.40px solid #c9dbe9;border-radius:6.0px;box-sizing:border-box;"></div>
<svg class="b" style="left:36.40px;top:1040.80px;" width="20.00" height="18.40" viewBox="0 0 5.00 4.60"><rect x="0.5" y="1.4" width="4" height="1.9" rx="0.9" fill="none" stroke="#1d5a8c" stroke-width="0.55"/></svg>
<span class="t" style="left:70.00px;top:1041.12px;font-size:17.60px;line-height:17.60px;color:#163d63;transform-origin:0 50%;transform:scaleX(0.8906);-webkit-text-stroke:0.40px #163d63;font-weight:bold;">Text Field</span>
<svg class="b" style="left:304.00px;top:1041.20px;" width="12.00" height="17.60" viewBox="0 0 3.00 4.40"><path d="M0.3 0.5h2.4M0.3 1.6h2.4M0.3 2.7h2.4M0.3 3.8h2.4" stroke="#9db1c4" stroke-width="0.5" stroke-dasharray="0.9 0.5"/></svg>
<div class="b" style="left:20.00px;top:1088.00px;width:310.00px;height:2.00px;background:#e3e8ef;"></div>
<span class="t" style="left:28.00px;top:1108.22px;font-size:18.40px;line-height:18.40px;color:#1b2332;transform-origin:0 50%;transform:scaleX(0.8989);-webkit-text-stroke:0.40px #1b2332;font-weight:bold;">Primary Fields</span>
<svg class="b" style="left:304.00px;top:1111.20px;" width="16.00" height="10.40" viewBox="0 0 4.00 2.60"><path d="M0.5 0.4L2 1.9L3.5 0.4" fill="none" stroke="#2a3342" stroke-width="0.75"/></svg>
<div class="b" style="left:20.00px;top:1138.40px;width:310.00px;height:2.00px;background:#e3e8ef;"></div>
<span class="t" style="left:28.00px;top:1160.22px;font-size:18.40px;line-height:18.40px;color:#1b2332;transform-origin:0 50%;transform:scaleX(0.9057);-webkit-text-stroke:0.40px #1b2332;font-weight:bold;">Secondary Fields</span>
<svg class="b" style="left:304.00px;top:1163.20px;" width="16.00" height="10.40" viewBox="0 0 4.00 2.60"><path d="M0.5 0.4L2 1.9L3.5 0.4" fill="none" stroke="#2a3342" stroke-width="0.75"/></svg>
<div class="b" style="left:20.00px;top:1190.40px;width:310.00px;height:2.00px;background:#e3e8ef;"></div>
<div class="b" style="left:352.00px;top:130.40px;width:1530.00px;height:50.40px;background:#1c3f94;"></div>
<span class="t" style="left:752.00px;top:145.12px;font-size:17.60px;line-height:17.60px;color:#fff;transform-origin:0 50%;transform:scaleX(0.8713);-webkit-text-stroke:0.40px #fff;font-weight:bold;">Canvas elements cannot be interacted with when editing a component or when viewing the module.</span>
<div class="b" style="left:352.00px;top:180.80px;width:1530.00px;height:52.80px;background:#fff;"></div>
<div class="b" style="left:352.00px;top:232.80px;width:1530.00px;height:2.40px;background:#e3e8ef;"></div>
<span class="t" style="left:380.00px;top:196.22px;font-size:18.40px;line-height:18.40px;color:#2a3342;transform-origin:0 50%;transform:scaleX(0.9278);">Runtime Version:</span>
<span class="t" style="left:524.00px;top:196.22px;font-size:18.40px;line-height:18.40px;color:#2a3342;transform-origin:0 50%;transform:scaleX(0.9658);">Vega (2.0)</span>
<svg class="b" style="left:618.00px;top:203.20px;" width="14.00" height="9.60" viewBox="0 0 3.50 2.40"><path d="M0.3 0.3h2.6l-1.3 1.7z" fill="#1f5f9a"/></svg>
<div class="b" style="left:1652.00px;top:192.00px;width:51.20px;height:29.60px;background:#3a4252;border-radius:16px;"></div>
<div class="b" style="left:1656.00px;top:196.00px;width:21.60px;height:21.60px;background:#fff;border-radius:12px;"></div>
<span class="t" style="left:1718.00px;top:196.22px;font-size:18.40px;line-height:18.40px;color:#2a3342;transform-origin:0 50%;transform:scaleX(0.9292);">Show UI Headers</span>
<div class="b" style="left:352.00px;top:235.20px;width:1530.00px;height:1184.80px;background:#f3f6fa;"></div>
<div class="b" style="left:366.40px;top:248.00px;width:1497.60px;height:1192.00px;background:#fff;border:2.40px solid #dde4ec;border-radius:4px;box-sizing:border-box;"></div>
<div class="b" style="left:387.20px;top:278.40px;width:1457.60px;height:141.60px;background:#fff;border:2.40px solid #d5dde8;border-radius:4px;box-sizing:border-box;"></div>
<div class="b" style="left:389.20px;top:280.40px;width:1453.60px;height:42.80px;background:#e9edf4;"></div>
<svg class="b" style="left:408.00px;top:295.60px;" width="16.00" height="16.00" viewBox="0 0 4.00 4.00"><rect x="0.4" y="0.5" width="3.2" height="2.8" fill="none" stroke="#3c4555" stroke-width="0.5"/><path d="M0.4 1.5h3.2M1.5 1.5v1.8M2.6 1.5v1.8" stroke="#3c4555" stroke-width="0.35"/></svg>
<span class="t" style="left:428.00px;top:295.82px;font-size:19.20px;line-height:19.20px;color:#1b2332;transform-origin:0 50%;transform:scaleX(0.9545);font-weight:bold;">panelHeader</span>
<svg class="b" style="left:1810.00px;top:298.00px;" width="16.00" height="10.40" viewBox="0 0 4.00 2.60"><path d="M0.5 0.4L2 1.9L3.5 0.4" fill="none" stroke="#1b2332" stroke-width="0.8"/></svg>
<span class="t" style="left:428.00px;top:349.12px;font-size:17.60px;line-height:17.60px;color:#1b2332;transform-origin:0 50%;transform:scaleX(0.9415);">Imported:</span>
<span class="t" style="left:499.20px;top:349.32px;font-size:17.20px;line-height:17.20px;color:#3b86c4;transform-origin:0 50%;transform:scaleX(1.0712);">66e052e9e332069d34fe30bb</span>
<span class="t" style="left:428.00px;top:381.12px;font-size:17.60px;line-height:17.60px;color:#1f6fa8;transform-origin:0 50%;transform:scaleX(0.9903);">Preview Module</span>
<div class="b" style="left:388.00px;top:432.40px;width:1456.00px;height:48.40px;background:#f5e5fb;border:3.60px solid #c797de;border-radius:5.6px;box-sizing:border-box;border-left:4.40px solid #b88bd6;"></div>
<svg class="b" style="left:405.60px;top:448.80px;" width="16.00" height="16.00" viewBox="0 0 4.00 4.00"><path d="M0.3 0.8h3.4M0.3 2h3.4M0.3 3.2h3.4" stroke="#300a4c" stroke-width="0.55"/><rect x="1.1" y="0.2" width="0.9" height="1.2" fill="#300a4c"/><rect x="2.3" y="2.6" width="0.9" height="1.2" fill="#300a4c"/></svg>
<span class="t" style="left:428.00px;top:446.92px;font-size:20.00px;line-height:20.00px;color:#300a4c;transform-origin:0 50%;transform:scaleX(0.8717);-webkit-text-stroke:0.40px #300a4c;font-weight:bold;">initOnLoad</span>
<div class="b" style="left:1779.20px;top:443.60px;width:48.80px;height:26.40px;background:#151b26;border-radius:13.6px;"></div>
<span class="t" style="left:1788.80px;top:450.82px;font-size:15.20px;line-height:15.20px;color:#fff;font-weight:bold;">1</span>
<div class="b" style="left:1802.40px;top:447.60px;width:18.40px;height:18.40px;background:#fff;border-radius:9.6px;"></div>
<span class="t" style="left:1809.60px;top:452.62px;font-size:13.60px;line-height:13.60px;color:#151b26;font-weight:bold;">i</span>
<div class="b" style="left:388.00px;top:491.20px;width:1456.00px;height:48.40px;background:#f5e5fb;border:3.60px solid #c797de;border-radius:5.6px;box-sizing:border-box;border-left:4.40px solid #b88bd6;"></div>
<svg class="b" style="left:405.60px;top:507.60px;" width="16.00" height="16.00" viewBox="0 0 4.00 4.00"><rect x="0.4" y="0.2" width="3.2" height="3.6" rx="0.4" fill="#300a4c"/><rect x="0.9" y="0.7" width="2.2" height="0.9" fill="#f5e5fb"/></svg>
<span class="t" style="left:428.00px;top:506.92px;font-size:20.00px;line-height:20.00px;color:#300a4c;transform-origin:0 50%;transform:scaleX(0.9155);-webkit-text-stroke:0.40px #300a4c;font-weight:bold;">calcSetDates</span>
<div class="b" style="left:1779.20px;top:502.40px;width:48.80px;height:26.40px;background:#151b26;border-radius:13.6px;"></div>
<span class="t" style="left:1788.80px;top:506.82px;font-size:15.20px;line-height:15.20px;color:#fff;font-weight:bold;">1</span>
<div class="b" style="left:1802.40px;top:506.40px;width:18.40px;height:18.40px;background:#fff;border-radius:9.6px;"></div>
<span class="t" style="left:1809.60px;top:508.62px;font-size:13.60px;line-height:13.60px;color:#151b26;font-weight:bold;">i</span>
<div class="b" style="left:388.00px;top:550.00px;width:1456.00px;height:48.40px;background:#f5e5fb;border:3.60px solid #c797de;border-radius:5.6px;box-sizing:border-box;border-left:4.40px solid #b88bd6;"></div>
<svg class="b" style="left:405.60px;top:566.40px;" width="16.00" height="16.00" viewBox="0 0 4.00 4.00"><path d="M0.3 0.8h3.4M0.3 2h3.4M0.3 3.2h3.4" stroke="#300a4c" stroke-width="0.55"/><rect x="1.1" y="0.2" width="0.9" height="1.2" fill="#300a4c"/><rect x="2.3" y="2.6" width="0.9" height="1.2" fill="#300a4c"/></svg>
<span class="t" style="left:428.00px;top:562.92px;font-size:20.00px;line-height:20.00px;color:#300a4c;transform-origin:0 50%;transform:scaleX(0.8896);-webkit-text-stroke:0.40px #300a4c;font-weight:bold;">initGetKPI</span>
<svg class="b" style="left:388.00px;top:608.80px;" width="1456.00" height="48.80" viewBox="0 0 364.00 12.20"><rect x="0.4" y="0.4" width="363.2" height="11.399999999999999" fill="#fff" stroke="#2f3644" stroke-width="1" stroke-dasharray="1.25 1.15"/></svg>
<svg class="b" style="left:408.80px;top:624.80px;" width="14.40" height="16.80" viewBox="0 0 4 4.4"><path d="M1.3 0.2h1.4v1.7h0.5l0.6 2.3h-3.6l0.6-2.3h0.5z" fill="#1f2735"/><rect x="1.35" y="2.6" width="1.3" height="0.7" fill="#fff"/></svg>
<span class="t" style="left:430.00px;top:624.22px;font-size:18.40px;line-height:18.40px;color:#1f2735;transform-origin:0 50%;transform:scaleX(1.0044);">fromDate</span>
<div class="b" style="left:1779.20px;top:620.00px;width:48.80px;height:26.40px;background:#151b26;border-radius:13.6px;"></div>
<span class="t" style="left:1788.80px;top:626.82px;font-size:15.20px;line-height:15.20px;color:#fff;font-weight:bold;">1</span>
<div class="b" style="left:1802.40px;top:624.00px;width:18.40px;height:18.40px;background:#fff;border-radius:9.6px;"></div>
<span class="t" style="left:1809.60px;top:628.62px;font-size:13.60px;line-height:13.60px;color:#151b26;font-weight:bold;">i</span>
<svg class="b" style="left:388.00px;top:670.20px;" width="1456.00" height="48.80" viewBox="0 0 364.00 12.20"><rect x="0.4" y="0.4" width="363.2" height="11.399999999999999" fill="#fff" stroke="#2f3644" stroke-width="1" stroke-dasharray="1.25 1.15"/></svg>
<svg class="b" style="left:408.80px;top:686.20px;" width="14.40" height="16.80" viewBox="0 0 4 4.4"><path d="M1.3 0.2h1.4v1.7h0.5l0.6 2.3h-3.6l0.6-2.3h0.5z" fill="#1f2735"/><rect x="1.35" y="2.6" width="1.3" height="0.7" fill="#fff"/></svg>
<span class="t" style="left:430.00px;top:684.22px;font-size:18.40px;line-height:18.40px;color:#1f2735;transform-origin:0 50%;transform:scaleX(1.0699);">toDate</span>
<div class="b" style="left:1779.20px;top:681.40px;width:48.80px;height:26.40px;background:#151b26;border-radius:13.6px;"></div>
<span class="t" style="left:1788.80px;top:686.82px;font-size:15.20px;line-height:15.20px;color:#fff;font-weight:bold;">1</span>
<div class="b" style="left:1802.40px;top:685.40px;width:18.40px;height:18.40px;background:#fff;border-radius:9.6px;"></div>
<span class="t" style="left:1809.60px;top:688.62px;font-size:13.60px;line-height:13.60px;color:#151b26;font-weight:bold;">i</span>
<svg class="b" style="left:388.00px;top:731.60px;" width="1456.00" height="48.80" viewBox="0 0 364.00 12.20"><rect x="0.4" y="0.4" width="363.2" height="11.399999999999999" fill="#fff" stroke="#2f3644" stroke-width="1" stroke-dasharray="1.25 1.15"/></svg>
<svg class="b" style="left:408.80px;top:747.60px;" width="14.40" height="16.80" viewBox="0 0 4 4.4"><path d="M1.3 0.2h1.4v1.7h0.5l0.6 2.3h-3.6l0.6-2.3h0.5z" fill="#1f2735"/><rect x="1.35" y="2.6" width="1.3" height="0.7" fill="#fff"/></svg>
<span class="t" style="left:430.00px;top:748.22px;font-size:18.40px;line-height:18.40px;color:#1f2735;transform-origin:0 50%;transform:scaleX(1.0643);">taskAssignedFilter</span>
<div class="b" style="left:1779.20px;top:742.80px;width:48.80px;height:26.40px;background:#151b26;border-radius:13.6px;"></div>
<span class="t" style="left:1788.80px;top:746.82px;font-size:15.20px;line-height:15.20px;color:#fff;font-weight:bold;">1</span>
<div class="b" style="left:1802.40px;top:746.80px;width:18.40px;height:18.40px;background:#fff;border-radius:9.6px;"></div>
<span class="t" style="left:1809.60px;top:748.62px;font-size:13.60px;line-height:13.60px;color:#151b26;font-weight:bold;">i</span>
<svg class="b" style="left:388.00px;top:793.00px;" width="1456.00" height="48.80" viewBox="0 0 364.00 12.20"><rect x="0.4" y="0.4" width="363.2" height="11.399999999999999" fill="#e3f4f8" stroke="#1b8c9c" stroke-width="1" stroke-dasharray="1.25 1.15"/></svg>
<svg class="b" style="left:408.80px;top:809.00px;" width="14.40" height="16.80" viewBox="0 0 4 4.4"><path d="M1.3 0.2h1.4v1.7h0.5l0.6 2.3h-3.6l0.6-2.3h0.5z" fill="#2a62d8"/><rect x="1.35" y="2.6" width="1.3" height="0.7" fill="#fff"/></svg>
<span class="t" style="left:430.00px;top:808.22px;font-size:18.40px;line-height:18.40px;color:#1f4fb8;transform-origin:0 50%;transform:scaleX(0.9723);font-weight:bold;">taskOutOfSLAFilter</span>
<div class="b" style="left:1779.20px;top:804.20px;width:48.80px;height:26.40px;background:#151b26;border-radius:13.6px;"></div>
<span class="t" style="left:1788.80px;top:810.82px;font-size:15.20px;line-height:15.20px;color:#fff;font-weight:bold;">1</span>
<div class="b" style="left:1802.40px;top:808.20px;width:18.40px;height:18.40px;background:#fff;border-radius:9.6px;"></div>
<span class="t" style="left:1809.60px;top:812.62px;font-size:13.60px;line-height:13.60px;color:#151b26;font-weight:bold;">i</span>
<svg class="b" style="left:388.00px;top:854.40px;" width="1456.00" height="48.80" viewBox="0 0 364.00 12.20"><rect x="0.4" y="0.4" width="363.2" height="11.399999999999999" fill="#fff" stroke="#2f3644" stroke-width="1" stroke-dasharray="1.25 1.15"/></svg>
<svg class="b" style="left:408.80px;top:870.40px;" width="14.40" height="16.80" viewBox="0 0 4 4.4"><path d="M1.3 0.2h1.4v1.7h0.5l0.6 2.3h-3.6l0.6-2.3h0.5z" fill="#1f2735"/><rect x="1.35" y="2.6" width="1.3" height="0.7" fill="#fff"/></svg>
<span class="t" style="left:430.00px;top:868.22px;font-size:18.40px;line-height:18.40px;color:#1f2735;transform-origin:0 50%;transform:scaleX(1.0634);">taskCompletedFilter</span>
<div class="b" style="left:1779.20px;top:865.60px;width:48.80px;height:26.40px;background:#151b26;border-radius:13.6px;"></div>
<span class="t" style="left:1788.80px;top:870.82px;font-size:15.20px;line-height:15.20px;color:#fff;font-weight:bold;">1</span>
<div class="b" style="left:1802.40px;top:869.60px;width:18.40px;height:18.40px;background:#fff;border-radius:9.6px;"></div>
<span class="t" style="left:1809.60px;top:872.62px;font-size:13.60px;line-height:13.60px;color:#151b26;font-weight:bold;">i</span>
<svg class="b" style="left:388.00px;top:915.80px;" width="1456.00" height="48.80" viewBox="0 0 364.00 12.20"><rect x="0.4" y="0.4" width="363.2" height="11.399999999999999" fill="#fff" stroke="#2f3644" stroke-width="1" stroke-dasharray="1.25 1.15"/></svg>
<svg class="b" style="left:408.80px;top:931.80px;" width="14.40" height="16.80" viewBox="0 0 4 4.4"><path d="M1.3 0.2h1.4v1.7h0.5l0.6 2.3h-3.6l0.6-2.3h0.5z" fill="#1f2735"/><rect x="1.35" y="2.6" width="1.3" height="0.7" fill="#fff"/></svg>
<span class="t" style="left:430.00px;top:932.22px;font-size:18.40px;line-height:18.40px;color:#1f2735;transform-origin:0 50%;transform:scaleX(1.0438);">caseResolutionFilter</span>
<div class="b" style="left:1779.20px;top:927.00px;width:48.80px;height:26.40px;background:#151b26;border-radius:13.6px;"></div>
<span class="t" style="left:1788.80px;top:934.82px;font-size:15.20px;line-height:15.20px;color:#fff;font-weight:bold;">1</span>
<div class="b" style="left:1802.40px;top:931.00px;width:18.40px;height:18.40px;background:#fff;border-radius:9.6px;"></div>
<span class="t" style="left:1809.60px;top:932.62px;font-size:13.60px;line-height:13.60px;color:#151b26;font-weight:bold;">i</span>
<svg class="b" style="left:388.00px;top:977.20px;" width="1456.00" height="48.80" viewBox="0 0 364.00 12.20"><rect x="0.4" y="0.4" width="363.2" height="11.399999999999999" fill="#fff" stroke="#2f3644" stroke-width="1" stroke-dasharray="1.25 1.15"/></svg>
<svg class="b" style="left:408.80px;top:993.20px;" width="14.40" height="16.80" viewBox="0 0 4 4.4"><path d="M1.3 0.2h1.4v1.7h0.5l0.6 2.3h-3.6l0.6-2.3h0.5z" fill="#1f2735"/><rect x="1.35" y="2.6" width="1.3" height="0.7" fill="#fff"/></svg>
<span class="t" style="left:430.00px;top:992.22px;font-size:18.40px;line-height:18.40px;color:#1f2735;transform-origin:0 50%;transform:scaleX(1.0722);">inFlightTaskFilter</span>
<div class="b" style="left:1779.20px;top:988.40px;width:48.80px;height:26.40px;background:#151b26;border-radius:13.6px;"></div>
<span class="t" style="left:1788.80px;top:994.82px;font-size:15.20px;line-height:15.20px;color:#fff;font-weight:bold;">1</span>
<div class="b" style="left:1802.40px;top:992.40px;width:18.40px;height:18.40px;background:#fff;border-radius:9.6px;"></div>
<span class="t" style="left:1809.60px;top:996.62px;font-size:13.60px;line-height:13.60px;color:#151b26;font-weight:bold;">i</span>
<div class="b" style="left:388.00px;top:1038.40px;width:1456.00px;height:48.40px;background:#f5e5fb;border:3.60px solid #c797de;border-radius:5.6px;box-sizing:border-box;border-left:4.40px solid #b88bd6;"></div>
<svg class="b" style="left:405.60px;top:1054.80px;" width="16.00" height="16.00" viewBox="0 0 4.00 4.00"><rect x="0.4" y="0.4" width="3.2" height="3.2" rx="0.2" fill="none" stroke="#300a4c" stroke-width="0.65"/><path d="M1.2 2.8L2.8 1.2M1.8 1.1h1.1v1.1" stroke="#300a4c" stroke-width="0.5" fill="none"/></svg>
<span class="t" style="left:428.00px;top:1054.92px;font-size:20.00px;line-height:20.00px;color:#300a4c;transform-origin:0 50%;transform:scaleX(0.8966);-webkit-text-stroke:0.40px #300a4c;font-weight:bold;">plugGetTaskAssigned</span>
<div class="b" style="left:388.00px;top:1097.20px;width:1456.00px;height:48.40px;background:#f5e5fb;border:3.60px solid #c797de;border-radius:5.6px;box-sizing:border-box;border-left:4.40px solid #b88bd6;"></div>
<svg class="b" style="left:405.60px;top:1113.60px;" width="16.00" height="16.00" viewBox="0 0 4.00 4.00"><rect x="0.4" y="0.4" width="3.2" height="3.2" rx="0.2" fill="none" stroke="#300a4c" stroke-width="0.65"/><path d="M1.2 2.8L2.8 1.2M1.8 1.1h1.1v1.1" stroke="#300a4c" stroke-width="0.5" fill="none"/></svg>
<span class="t" style="left:428.00px;top:1110.92px;font-size:20.00px;line-height:20.00px;color:#300a4c;transform-origin:0 50%;transform:scaleX(0.8905);-webkit-text-stroke:0.40px #300a4c;font-weight:bold;">plugInGetTaskOutOfSLAFilter</span>
<div class="b" style="left:388.00px;top:1156.00px;width:1456.00px;height:48.40px;background:#f5e5fb;border:3.60px solid #c797de;border-radius:5.6px;box-sizing:border-box;border-left:4.40px solid #b88bd6;"></div>
<svg class="b" style="left:405.60px;top:1172.40px;" width="16.00" height="16.00" viewBox="0 0 4.00 4.00"><rect x="0.4" y="0.4" width="3.2" height="3.2" rx="0.2" fill="none" stroke="#300a4c" stroke-width="0.65"/><path d="M1.2 2.8L2.8 1.2M1.8 1.1h1.1v1.1" stroke="#300a4c" stroke-width="0.5" fill="none"/></svg>
<span class="t" style="left:428.00px;top:1170.92px;font-size:20.00px;line-height:20.00px;color:#300a4c;transform-origin:0 50%;transform:scaleX(0.9059);-webkit-text-stroke:0.40px #300a4c;font-weight:bold;">plugGetTaskCompleted</span>
<div class="b" style="left:388.00px;top:1214.80px;width:1456.00px;height:48.40px;background:#f5e5fb;border:3.60px solid #c797de;border-radius:5.6px;box-sizing:border-box;border-left:4.40px solid #b88bd6;"></div>
<svg class="b" style="left:405.60px;top:1231.20px;" width="16.00" height="16.00" viewBox="0 0 4.00 4.00"><rect x="0.4" y="0.4" width="3.2" height="3.2" rx="0.2" fill="none" stroke="#300a4c" stroke-width="0.65"/><path d="M1.2 2.8L2.8 1.2M1.8 1.1h1.1v1.1" stroke="#300a4c" stroke-width="0.5" fill="none"/></svg>
<span class="t" style="left:428.00px;top:1230.92px;font-size:20.00px;line-height:20.00px;color:#300a4c;transform-origin:0 50%;transform:scaleX(0.9018);-webkit-text-stroke:0.40px #300a4c;font-weight:bold;">plugGetTaskInflight</span>
<div class="b" style="left:388.00px;top:1273.60px;width:1456.00px;height:48.40px;background:#f5e5fb;border:3.60px solid #c797de;border-radius:5.6px;box-sizing:border-box;border-left:4.40px solid #b88bd6;"></div>
<svg class="b" style="left:405.60px;top:1290.00px;" width="16.00" height="16.00" viewBox="0 0 4.00 4.00"><rect x="0.4" y="0.4" width="3.2" height="3.2" rx="0.2" fill="none" stroke="#300a4c" stroke-width="0.65"/><path d="M1.2 2.8L2.8 1.2M1.8 1.1h1.1v1.1" stroke="#300a4c" stroke-width="0.5" fill="none"/></svg>
<span class="t" style="left:428.00px;top:1286.92px;font-size:20.00px;line-height:20.00px;color:#300a4c;transform-origin:0 50%;transform:scaleX(0.8911);-webkit-text-stroke:0.40px #300a4c;font-weight:bold;">plugGetCaseResolution</span>
<div class="b" style="left:388.00px;top:1332.40px;width:1456.00px;height:48.40px;background:#f5e5fb;border:3.60px solid #c797de;border-radius:5.6px;box-sizing:border-box;border-left:4.40px solid #b88bd6;"></div>
<svg class="b" style="left:405.60px;top:1348.80px;" width="16.00" height="16.00" viewBox="0 0 4.00 4.00"><circle cx="2" cy="2" r="1.1" fill="none" stroke="#300a4c" stroke-width="0.7"/><path d="M2 0v4M0 2h4" stroke="#300a4c" stroke-width="0.7"/></svg>
<span class="t" style="left:428.00px;top:1346.92px;font-size:20.00px;line-height:20.00px;color:#300a4c;transform-origin:0 50%;transform:scaleX(0.8747);-webkit-text-stroke:0.40px #300a4c;font-weight:bold;">dwfAvgTaskResolutionTime</span>
<div class="b" style="left:388.00px;top:1391.20px;width:1456.00px;height:48.40px;background:#f5e5fb;border:3.60px solid #c797de;border-radius:5.6px;box-sizing:border-box;border-left:4.40px solid #b88bd6;"></div>
<svg class="b" style="left:405.60px;top:1407.60px;" width="16.00" height="16.00" viewBox="0 0 4.00 4.00"><circle cx="2" cy="2" r="1.1" fill="none" stroke="#300a4c" stroke-width="0.7"/><path d="M2 0v4M0 2h4" stroke="#300a4c" stroke-width="0.7"/></svg>
<span class="t" style="left:428.00px;top:1406.92px;font-size:20.00px;line-height:20.00px;color:#300a4c;transform-origin:0 50%;transform:scaleX(0.8775);-webkit-text-stroke:0.40px #300a4c;font-weight:bold;">dwfAvgCaseResolutionTime</span>
<div class="b" style="left:1026.00px;top:776.00px;width:42.00px;height:41.60px;background:#151b26;border-radius:4.8px;"></div>
<svg class="b" style="left:1036.00px;top:786.80px;" width="20.00" height="20.00" viewBox="0 0 5.00 5.00"><circle cx="2.5" cy="2.5" r="1.5" fill="none" stroke="#fff" stroke-width="1.1"/><circle cx="2.5" cy="2.5" r="2.1" fill="none" stroke="#fff" stroke-width="0.6" stroke-dasharray="0.7 0.95"/></svg>
<div class="b" style="left:1882.00px;top:130.40px;width:526.00px;height:1289.60px;background:#fff;"></div>
<div class="b" style="left:1880.80px;top:130.40px;width:2.40px;height:1289.60px;background:#dfe6ee;"></div>
<div class="b" style="left:1865.20px;top:150.40px;width:17.20px;height:25.60px;background:#fff;border:1.60px solid #dfe6ee;border-radius:4px;box-sizing:border-box;"></div>
<svg class="b" style="left:1868.00px;top:156.00px;" width="12.00" height="16.00" viewBox="0 0 3.00 4.00"><path d="M1 0.6L2.2 2L1 3.4" fill="none" stroke="#3b79b8" stroke-width="0.6"/></svg>
<span class="t" style="left:1912.00px;top:163.02px;font-size:24.80px;line-height:24.80px;color:#1b2332;transform-origin:0 50%;transform:scaleX(0.9257);-webkit-text-stroke:0.40px #1b2332;font-weight:bold;">Module Details</span>
<div class="b" style="left:1883.20px;top:220.80px;width:524.80px;height:2.00px;background:#e3e8ef;"></div>
<span class="t" style="left:1912.00px;top:256.02px;font-size:18.80px;line-height:18.80px;color:#1b2332;transform-origin:0 50%;transform:scaleX(0.9655);font-weight:bold;">Module Name</span>
<span class="t" style="left:1912.00px;top:288.92px;font-size:18.00px;line-height:18.00px;color:#323b4a;transform-origin:0 50%;transform:scaleX(1.0220);">KPI Dashboard - Case Management Template 1.0.3</span>
<span class="t" style="left:1912.00px;top:312.92px;font-size:18.00px;line-height:18.00px;color:#323b4a;transform-origin:0 50%;transform:scaleX(1.0403);">2024-09-10T14:08:40.782Z</span>
<span class="t" style="left:1912.00px;top:356.02px;font-size:18.80px;line-height:18.80px;color:#1b2332;transform-origin:0 50%;transform:scaleX(0.9664);font-weight:bold;">Module Path</span>
<span class="t" style="left:1912.00px;top:388.92px;font-size:18.00px;line-height:18.00px;color:#323b4a;transform-origin:0 50%;transform:scaleX(1.0764);">kpi66e052e8e332069d34fe307d</span>
<span class="t" style="left:1912.00px;top:432.02px;font-size:18.80px;line-height:18.80px;color:#1b2332;transform-origin:0 50%;transform:scaleX(0.9575);font-weight:bold;">Module ID</span>
<span class="t" style="left:1912.00px;top:464.92px;font-size:18.00px;line-height:18.00px;color:#323b4a;transform-origin:0 50%;transform:scaleX(1.0712);">66e052eae332069d34fe31db</span>
<span class="t" style="left:1912.00px;top:508.02px;font-size:18.80px;line-height:18.80px;color:#1b2332;transform-origin:0 50%;transform:scaleX(0.9471);font-weight:bold;">Module Description</span>
<span class="t" style="left:1912.00px;top:536.92px;font-size:18.00px;line-height:18.00px;color:#323b4a;transform-origin:0 50%;transform:scaleX(1.0225);">None</span>
<span class="t" style="left:1912.00px;top:580.02px;font-size:18.80px;line-height:18.80px;color:#1b2332;transform-origin:0 50%;transform:scaleX(0.9868);font-weight:bold;">Module Type</span>
<span class="t" style="left:1912.00px;top:612.92px;font-size:18.00px;line-height:18.00px;color:#323b4a;transform-origin:0 50%;transform:scaleX(1.0245);">Front-End</span>
<div class="b" style="left:1912.00px;top:666.40px;width:464.00px;height:2.00px;background:#e3e8ef;"></div>
</div>
<div class="w" style="left:270px;top:178px;width:1553.6px;height:918.4px;border-radius:24px 24px 16px 16px">
<div class="b" style="left:0.00px;top:0.00px;width:1556.00px;height:920.00px;background:#fff;"></div>
<div class="b" style="left:0.00px;top:0.00px;width:1552.00px;height:32.80px;background:#000;"></div>
<svg class="b" style="left:18.00px;top:6.40px;" width="14.00" height="19.20" viewBox="0 0 3.50 4.80"><path d="M1.7 1.3c0.5-0.5 1.2-0.3 1.5 0.1-0.7 0.4-0.6 1.4 0.1 1.7-0.3 0.8-0.8 1.3-1.2 1.3-0.3 0-0.4-0.2-0.7-0.2s-0.4 0.2-0.7 0.2c-0.6 0-1.3-1.6-0.7-2.6 0.4-0.7 1.2-0.8 1.7-0.5zM1.7 1.1c0-0.5 0.4-0.9 0.8-1 0.05 0.5-0.35 1-0.8 1z" fill="#fff"/></svg>
<span class="t" style="left:64.00px;top:7.72px;font-size:14.40px;line-height:14.40px;color:#fff;transform-origin:0 50%;transform:scaleX(0.8964);-webkit-text-stroke:0.40px #fff;font-weight:bold;">Andor</span>
<span class="t" style="left:129.20px;top:7.72px;font-size:14.40px;line-height:14.40px;color:#fff;transform-origin:0 50%;transform:scaleX(0.8964);">File</span>
<span class="t" style="left:172.00px;top:7.72px;font-size:14.40px;line-height:14.40px;color:#fff;letter-spacing:-0.041px;transform-origin:0 50%;transform:scaleX(0.8600);">Edit</span>
<span class="t" style="left:216.00px;top:7.72px;font-size:14.40px;line-height:14.40px;color:#fff;letter-spacing:-0.413px;transform-origin:0 50%;transform:scaleX(0.8600);">View</span>
<span class="t" style="left:257.20px;top:7.72px;font-size:14.40px;line-height:14.40px;color:#fff;letter-spacing:-0.302px;transform-origin:0 50%;transform:scaleX(0.8600);">Go</span>
<span class="t" style="left:300.00px;top:7.72px;font-size:14.40px;line-height:14.40px;color:#fff;transform-origin:0 50%;transform:scaleX(0.8825);">Window</span>
<div class="b" style="left:1252.80px;top:13.20px;width:14.40px;height:6.80px;background:#fff;border-radius:1.6px;"></div>
<svg class="b" style="left:1280.00px;top:10.00px;" width="16.00" height="14.00" viewBox="0 0 4.00 3.50"><path d="M0.4 1.4a2.3 2.3 0 0 1 3.2 0M1 2.1a1.4 1.4 0 0 1 2 0" fill="none" stroke="#fff" stroke-width="0.5"/><circle cx="2" cy="2.8" r="0.4" fill="#fff"/></svg>
<svg class="b" style="left:1310.00px;top:9.20px;" width="14.00" height="14.80" viewBox="0 0 3.50 3.70"><circle cx="1.4" cy="1.5" r="0.9" fill="none" stroke="#fff" stroke-width="0.45"/><path d="M2.1 2.2l0.9 0.9" stroke="#fff" stroke-width="0.45"/></svg>
<div class="b" style="left:1340.00px;top:12.00px;width:12.00px;height:9.60px;background:#ddd;border-radius:2.0px;"></div>
<div class="b" style="left:1369.20px;top:11.20px;width:10.80px;height:11.20px;background:#ddd;border-radius:3.2px;"></div>
<span class="t" style="left:1420.00px;top:8.82px;font-size:13.20px;line-height:13.20px;color:#fff;transform-origin:0 50%;transform:scaleX(0.8945);">Sat Sep 18  11:53 AM</span>
<div class="b" style="left:0.00px;top:32.80px;width:1552.00px;height:40.80px;background:#fff;"></div>
<div class="b" style="left:19.80px;top:48.60px;width:9.20px;height:9.20px;background:#ee4b40;border-radius:8px;"></div>
<div class="b" style="left:37.80px;top:48.60px;width:9.20px;height:9.20px;background:#f6b32b;border-radius:8px;"></div>
<div class="b" style="left:55.80px;top:48.60px;width:9.20px;height:9.20px;background:#3cc23f;border-radius:8px;"></div>
<svg class="b" style="left:88.00px;top:44.80px;" width="21.60" height="16.80" viewBox="0 0 5.40 4.20"><rect x="0.4" y="0.4" width="4.4" height="3.2" rx="0.5" fill="none" stroke="#777" stroke-width="0.5"/><path d="M1.9 0.4v3.2" stroke="#777" stroke-width="0.5"/></svg>
<svg class="b" style="left:130.00px;top:45.20px;" width="12.00" height="16.00" viewBox="0 0 3.00 4.00"><path d="M2 0.5L0.8 2L2 3.5" fill="none" stroke="#666" stroke-width="0.55"/></svg>
<svg class="b" style="left:158.00px;top:45.20px;" width="12.00" height="16.00" viewBox="0 0 3.00 4.00"><path d="M1 0.5L2.2 2L1 3.5" fill="none" stroke="#bbb" stroke-width="0.55"/></svg>
<svg class="b" style="left:513.20px;top:46.40px;" width="13.60" height="13.60" viewBox="0 0 3.40 3.40"><circle cx="1.7" cy="1.7" r="1.2" fill="none" stroke="#333" stroke-width="0.45"/><path d="M1.7 0.5a1.2 1.2 0 0 0 0 2.4z" fill="#333"/></svg>
<div class="b" style="left:543.20px;top:41.20px;width:464.80px;height:25.20px;background:#f0f0f1;border-radius:5.2px;"></div>
<span class="t" style="left:710.00px;top:47.22px;font-size:10.40px;line-height:10.40px;color:#444;transform-origin:0 50%;transform:scaleX(0.9459);">casemanagment.ampersand.com</span>
<svg class="b" style="left:696.80px;top:49.60px;" width="9.60" height="9.60" viewBox="0 0 2.40 2.40"><rect x="0.5" y="1" width="1.4" height="1.1" fill="#555"/><path d="M0.75 1v-0.3a0.45 0.45 0 0 1 0.9 0v0.3" fill="none" stroke="#555" stroke-width="0.25"/></svg>
<svg class="b" style="left:988.00px;top:47.20px;" width="13.60" height="13.60" viewBox="0 0 3.40 3.40"><path d="M2.6 1.2a1.05 1.05 0 1 0 0.15 1" fill="none" stroke="#555" stroke-width="0.4"/><path d="M2.9 0.6v0.8h-0.8" fill="none" stroke="#555" stroke-width="0.35"/></svg>
<svg class="b" style="left:1405.20px;top:45.20px;" width="17.60" height="17.60" viewBox="0 0 4.40 4.40"><circle cx="2.2" cy="2.2" r="1.7" fill="none" stroke="#666" stroke-width="0.4"/><circle cx="2.2" cy="1.8" r="0.55" fill="none" stroke="#666" stroke-width="0.35"/><path d="M1.2 3.2a1.1 1.1 0 0 1 2 0" fill="none" stroke="#666" stroke-width="0.35"/></svg>
<svg class="b" style="left:1442.00px;top:44.00px;" width="18.00" height="20.00" viewBox="0 0 4.50 5.00"><path d="M1 1.6h2.5v2.4h-2.5z M2.25 0.5v2 M1.5 1.1l0.75-0.7 0.75 0.7" fill="none" stroke="#666" stroke-width="0.4"/></svg>
<svg class="b" style="left:1480.00px;top:45.20px;" width="16.00" height="17.60" viewBox="0 0 4.00 4.40"><path d="M2 0.6v3.2M0.4 2.2h3.2" stroke="#666" stroke-width="0.45"/></svg>
<svg class="b" style="left:1516.00px;top:44.80px;" width="20.00" height="19.20" viewBox="0 0 5.00 4.80"><rect x="0.5" y="0.4" width="2.8" height="2.8" rx="0.5" fill="none" stroke="#666" stroke-width="0.4"/><rect x="1.5" y="1.3" width="2.8" height="2.8" rx="0.5" fill="#fff" stroke="#666" stroke-width="0.4"/></svg>
<div class="b" style="left:0.00px;top:73.60px;width:1552.00px;height:85.60px;background:#203a6b;"></div>
<svg class="b" style="left:56.00px;top:100.00px;" width="38.00" height="34.00" viewBox="0 0 9.50 8.50"><path d="M4.4 0.3L8.9 8H6.5L4.2 3.9L2.6 6.6L1.4 5.9z" fill="#fff"/><path d="M0.2 8L2.3 4.6L6 8z" fill="#fff"/></svg>
<span class="t" style="left:98.00px;top:90.12px;font-size:49.60px;line-height:49.60px;color:#fff;transform-origin:0 50%;transform:scaleX(0.9917);font-family:'Liberation Serif',serif;">andor</span>
<div class="b" style="left:244.00px;top:97.60px;width:941.60px;height:38.40px;background:#fff;border-radius:8px;"></div>
<svg class="b" style="left:260.80px;top:109.20px;" width="15.20" height="16.00" viewBox="0 0 3.80 4.00"><circle cx="1.5" cy="1.5" r="1.05" fill="none" stroke="#2b62c7" stroke-width="0.55"/><path d="M2.3 2.3L3.4 3.5" stroke="#2b62c7" stroke-width="0.6"/></svg>
<span class="t" style="left:282.80px;top:110.62px;font-size:15.60px;line-height:15.60px;color:#444;transform-origin:0 50%;transform:scaleX(0.9387);">Search</span>
<svg class="b" style="left:1230.00px;top:105.20px;" width="22.00" height="22.80" viewBox="0 0 5.50 5.70"><rect x="0.6" y="1" width="3.9" height="3.6" rx="0.4" fill="none" stroke="#fff" stroke-width="0.5"/><path d="M0.6 2.1h3.9M1.6 3h0.7M2.8 3h0.7M1.6 3.8h0.7" stroke="#fff" stroke-width="0.45"/></svg>
<div class="b" style="left:1244.80px;top:102.40px;width:8.80px;height:8.80px;background:#f0232d;border-radius:8px;"></div>
<svg class="b" style="left:1282.00px;top:102.80px;" width="26.00" height="27.20" viewBox="0 0 6.50 6.80"><path d="M3.2 1c-1.2 0-1.8 0.9-1.8 2v1.2l-0.6 0.8h4.8l-0.6-0.8v-1.2c0-1.1-0.6-2-1.8-2z" fill="none" stroke="#fff" stroke-width="0.5"/><path d="M2.6 5.6a0.6 0.6 0 0 0 1.2 0" fill="none" stroke="#fff" stroke-width="0.45"/></svg>
<div class="b" style="left:1296.80px;top:101.20px;width:8.80px;height:8.80px;background:#f0232d;border-radius:8px;"></div>
<div class="b" style="left:1329.20px;top:98.80px;width:36.00px;height:36.00px;border-radius:20.00px;background:#f4f1ee;overflow:hidden"><div class="b" style="left:11.60px;top:5.60px;width:12.80px;height:15.20px;border-radius:6.40px;background:#c99a7c"></div><div class="b" style="left:10.40px;top:3.60px;width:15.20px;height:6.80px;border-radius:6.00px 6.00px 0 0;background:#2a1d18"></div><div class="b" style="left:3.20px;top:22.40px;width:29.60px;height:20.00px;border-radius:12.00px 12.00px 0 0;background:#1d1d22"></div></div>
<span class="t" style="left:1374.00px;top:110.82px;font-size:15.20px;line-height:15.20px;color:#e6ebf5;transform-origin:0 50%;transform:scaleX(0.9561);">Daniel</span>
<svg class="b" style="left:1428.00px;top:111.60px;" width="16.00" height="12.00" viewBox="0 0 4.00 3.00"><path d="M0.6 0.6L2 2L3.4 0.6" fill="none" stroke="#fff" stroke-width="0.6"/></svg>
<svg class="b" style="left:1460.00px;top:104.00px;" width="26.40" height="26.40" viewBox="0 0 6.60 6.60"><circle cx="3.3" cy="3.3" r="2.7" fill="none" stroke="#fff" stroke-width="0.55"/><path d="M1 2.2h4.6M3.3 2.2v3.6M3.3 3.2L1.6 5.2M3.3 3.2L5 5.2" fill="none" stroke="#fff" stroke-width="0.5"/></svg>
<div class="b" style="left:0.00px;top:159.20px;width:1552.00px;height:40.80px;background:#ececec;"></div>
<div class="b" style="left:256.00px;top:159.20px;width:84.80px;height:43.20px;background:#203a6b;"></div>
<svg class="b" style="left:64.00px;top:171.20px;" width="16.80" height="16.80" viewBox="0 0 4.20 4.20"><path d="M0.3 0.8h3.6M0.3 2.1h3.6M0.3 3.4h3.6" stroke="#555" stroke-width="0.55"/></svg>
<span class="t" style="left:89.60px;top:169.72px;font-size:16.40px;line-height:16.40px;color:#555;transform-origin:0 50%;transform:scaleX(1.0114);">Tasks</span>
<svg class="b" style="left:167.20px;top:170.40px;" width="13.60" height="17.60" viewBox="0 0 3.40 4.40"><path d="M0.5 0.3h1.6l1 1v2.9h-2.6z" fill="#333"/><path d="M1 2h1.4M1 2.8h1.4" stroke="#ececec" stroke-width="0.3"/></svg>
<span class="t" style="left:189.20px;top:169.72px;font-size:16.40px;line-height:16.40px;color:#555;transform-origin:0 50%;transform:scaleX(1.0240);">Cases</span>
<svg class="b" style="left:270.00px;top:170.80px;" width="19.20" height="19.20" viewBox="0 0 4.80 4.80"><circle cx="2.4" cy="2.4" r="2" fill="#fff"/><path d="M1.4 3.2L2.1 2.2l0.6 0.6 0.8-1.2" fill="none" stroke="#203a6b" stroke-width="0.5"/></svg>
<span class="t" style="left:296.00px;top:173.72px;font-size:16.40px;line-height:16.40px;color:#fff;transform-origin:0 50%;transform:scaleX(1.1349);">KPI</span>
<svg class="b" style="left:358.00px;top:170.00px;" width="24.00" height="20.00" viewBox="0 0 6.00 5.00"><circle cx="1.6" cy="1.5" r="0.8" fill="#333"/><circle cx="4.2" cy="1.5" r="0.8" fill="#333"/><circle cx="2.9" cy="2" r="0.95" fill="#333" stroke="#ececec" stroke-width="0.3"/><path d="M0.2 4.2a1.5 1.5 0 0 1 2.2-1.3M5.6 4.2a1.5 1.5 0 0 0-2.2-1.3" fill="#333"/><path d="M1.2 4.6a1.7 1.7 0 0 1 3.4 0z" fill="#333"/></svg>
<span class="t" style="left:391.20px;top:169.72px;font-size:16.40px;line-height:16.40px;color:#555;transform-origin:0 50%;transform:scaleX(1.0373);">Team</span>
<svg class="b" style="left:467.20px;top:170.80px;" width="16.80" height="18.40" viewBox="0 0 4.20 4.60"><ellipse cx="2.1" cy="1" rx="1.7" ry="0.7" fill="#333"/><path d="M0.4 1.3v2.3c0 0.4 0.8 0.7 1.7 0.7s1.7-0.3 1.7-0.7v-2.3c0 0.4-0.8 0.7-1.7 0.7s-1.7-0.3-1.7-0.7z" fill="#333"/><path d="M0.4 2.5c0 0.4 0.8 0.7 1.7 0.7s1.7-0.3 1.7-0.7" fill="none" stroke="#ececec" stroke-width="0.25"/></svg>
<span class="t" style="left:495.20px;top:169.72px;font-size:16.40px;line-height:16.40px;color:#555;transform-origin:0 50%;transform:scaleX(1.0115);">Entities</span>
<svg class="b" style="left:559.20px;top:174.40px;" width="17.60" height="12.80" viewBox="0 0 4.40 3.20"><path d="M0.6 0.7L2.2 2.3L3.8 0.7" fill="none" stroke="#333" stroke-width="0.6"/></svg>
<div class="b" style="left:0.00px;top:200.00px;width:1552.00px;height:720.00px;background:#fff;"></div>
<div class="b" style="left:54.00px;top:235.20px;width:1442.00px;height:503.20px;background:#eeeeee;border-radius:3.2px;"></div>
<div class="b" style="left:55.20px;top:736.80px;width:1439.60px;height:2.40px;background:#d9d9d9;"></div>
<span class="t" style="left:90.00px;top:273.82px;font-size:35.20px;line-height:35.20px;color:#111;transform-origin:0 50%;transform:scaleX(0.8792);-webkit-text-stroke:0.40px #111;font-weight:bold;">KPIs</span>
<div class="b" style="left:90.00px;top:333.60px;width:315.20px;height:47.60px;background:#fff;border:2.00px solid #dcdcdc;border-radius:4.8px;box-sizing:border-box;"></div>
<span class="t" style="left:105.20px;top:353.72px;font-size:12.40px;line-height:12.40px;color:#888;transform-origin:0 50%;transform:scaleX(1.0545);">Last Day</span>
<svg class="b" style="left:377.60px;top:352.80px;" width="14.40" height="11.20" viewBox="0 0 3.60 2.80"><path d="M0.5 0.5L1.8 1.9L3.1 0.5" fill="none" stroke="#3b82d6" stroke-width="0.6"/></svg>
<span class="t" style="left:90.00px;top:409.82px;font-size:21.20px;line-height:21.20px;color:#000;transform-origin:0 50%;transform:scaleX(1.0411);font-weight:bold;-webkit-text-stroke:0.40px #000;">Task Resolution Data</span>
<div class="b" style="left:90.00px;top:455.20px;width:326.40px;height:112.80px;background:#fff;border:2.00px solid #e2e2e2;border-radius:5.2px;box-sizing:border-box;"></div>
<span class="t" style="left:108.80px;top:476.72px;font-size:32.40px;line-height:32.40px;color:#111;transform-origin:0 50%;transform:scaleX(0.8657);-webkit-text-stroke:0.40px #111;font-weight:bold;">15</span>
<span class="t" style="left:108.80px;top:528.92px;font-size:18.00px;line-height:18.00px;color:#222;transform-origin:0 50%;transform:scaleX(1.0715);">Number of Tasks Assigned</span>
<div class="b" style="left:438.20px;top:455.20px;width:326.40px;height:112.80px;background:#fff;border:2.00px solid #e2e2e2;border-radius:5.2px;box-sizing:border-box;"></div>
<span class="t" style="left:457.00px;top:476.72px;font-size:32.40px;line-height:32.40px;color:#111;transform-origin:0 50%;transform:scaleX(0.9767);font-weight:bold;">8</span>
<span class="t" style="left:457.00px;top:528.92px;font-size:18.00px;line-height:18.00px;color:#222;transform-origin:0 50%;transform:scaleX(1.1112);">Number of Tasks Completed</span>
<div class="b" style="left:786.40px;top:455.20px;width:326.40px;height:112.80px;background:#fff;border:2.00px solid #e2e2e2;border-radius:5.2px;box-sizing:border-box;"></div>
<span class="t" style="left:805.20px;top:476.72px;font-size:32.40px;line-height:32.40px;color:#111;transform-origin:0 50%;transform:scaleX(1.1432);font-weight:bold;">40</span>
<span class="t" style="left:805.20px;top:528.92px;font-size:18.00px;line-height:18.00px;color:#222;transform-origin:0 50%;transform:scaleX(1.0687);">Number of Tasks Inflight</span>
<div class="b" style="left:1134.60px;top:455.20px;width:326.40px;height:112.80px;background:#fff;border:2.00px solid #e2e2e2;border-radius:5.2px;box-sizing:border-box;"></div>
<span class="t" style="left:1153.40px;top:476.72px;font-size:32.40px;line-height:32.40px;color:#111;transform-origin:0 50%;transform:scaleX(0.9323);font-weight:bold;">2</span>
<span class="t" style="left:1153.40px;top:528.92px;font-size:18.00px;line-height:18.00px;color:#222;transform-origin:0 50%;transform:scaleX(1.0590);">Number of Tasks Out of SLA</span>
<div class="b" style="left:90.00px;top:590.40px;width:326.40px;height:112.00px;background:#fff;border:2.00px solid #e2e2e2;border-radius:5.2px;box-sizing:border-box;"></div>
<span class="t" style="left:108.80px;top:612.72px;font-size:32.40px;line-height:32.40px;color:#111;transform-origin:0 50%;transform:scaleX(0.9717);font-weight:bold;">.75 hr</span>
<span class="t" style="left:108.80px;top:664.92px;font-size:18.00px;line-height:18.00px;color:#222;transform-origin:0 50%;transform:scaleX(1.0475);">Average Task Resolution Time</span>
<div class="b" style="left:438.20px;top:590.40px;width:326.40px;height:112.00px;background:#fff;border:2.00px solid #e2e2e2;border-radius:5.2px;box-sizing:border-box;"></div>
<span class="t" style="left:457.00px;top:612.72px;font-size:32.40px;line-height:32.40px;color:#111;transform-origin:0 50%;transform:scaleX(0.9715);font-weight:bold;">3 days</span>
<span class="t" style="left:457.00px;top:664.92px;font-size:18.00px;line-height:18.00px;color:#222;transform-origin:0 50%;transform:scaleX(1.0411);">Average Case Resolution Time</span>
<div class="b" style="left:786.40px;top:590.40px;width:326.40px;height:112.00px;background:#fff;border:2.00px solid #e2e2e2;border-radius:5.2px;box-sizing:border-box;"></div>
<span class="t" style="left:805.20px;top:612.72px;font-size:32.40px;line-height:32.40px;color:#111;transform-origin:0 50%;transform:scaleX(1.0486);font-weight:bold;">20%</span>
<span class="t" style="left:805.20px;top:664.92px;font-size:18.00px;line-height:18.00px;color:#222;transform-origin:0 50%;transform:scaleX(1.0451);">Adherence to SLA (in %)</span>
</div>
<div class="w" style="left:0;top:370px;width:1200px;height:200px;overflow:visible">
<span class="t" style="left:20px;top:37.4px;font-size:79.2px;line-height:96px;color:#0e2648;transform-origin:0 50%;transform:scaleX(0.942);-webkit-text-stroke:0.6px #0e2648">Case Management</span>
</div>
</body></html>
